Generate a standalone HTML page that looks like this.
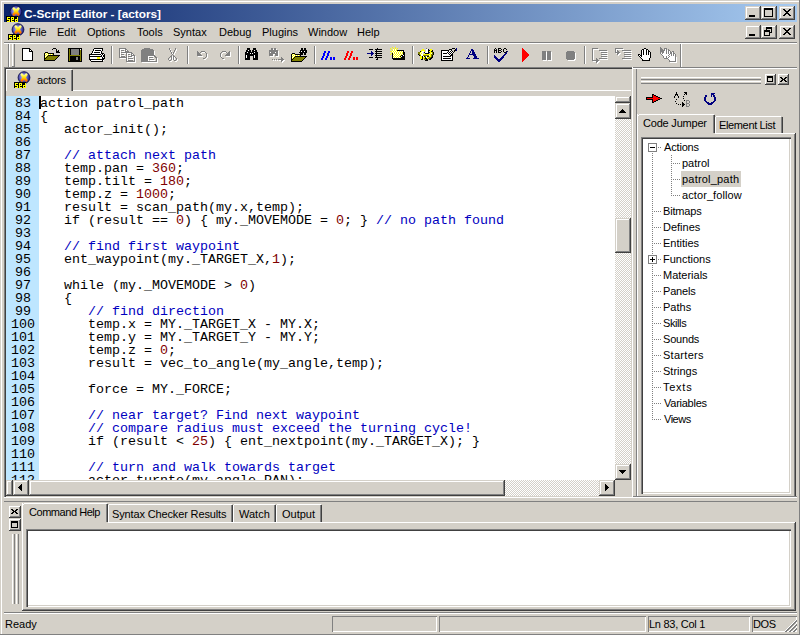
<!DOCTYPE html>
<html><head><meta charset="utf-8">
<style>
*{margin:0;padding:0;box-sizing:border-box}
html,body{width:800px;height:635px;overflow:hidden;background:#D4D0C8}
body{position:relative;font-family:"Liberation Sans",sans-serif;font-size:11px;color:#000}
.a{position:absolute}
svg.a{display:block}
.btn{position:absolute;background:#D4D0C8;box-shadow:inset -1px -1px 0 #404040,inset 1px 1px 0 #D4D0C8,inset -2px -2px 0 #808080,inset 2px 2px 0 #fff}
.btn2{position:absolute;background:#D4D0C8;box-shadow:inset -1px -1px 0 #404040,inset 1px 1px 0 #fff,inset -2px -2px 0 #808080}
.btn1{position:absolute;background:#D4D0C8;box-shadow:inset -1px -1px 0 #808080,inset 1px 1px 0 #fff}
.t{position:absolute;white-space:pre;line-height:13px}
.code{position:absolute;font-family:"Liberation Mono",monospace;font-size:13.33px;line-height:13px;white-space:pre;color:#000}
.ln{position:absolute;width:32px;text-align:center;font-family:"Liberation Mono",monospace;font-size:13.33px;line-height:13px;white-space:pre;color:#000}
.c{color:#0000C0}
.n{color:#800000}
.checker{background-image:repeating-conic-gradient(#fff 0 25%,#D4D0C8 0 50%);background-size:2px 2px}
</style></head><body>

<div class="a" style="left:1px;top:1px;width:798px;height:1px;background:#fff"></div>
<div class="a" style="left:1px;top:1px;width:1px;height:633px;background:#fff"></div>
<div class="a" style="left:799px;top:0px;width:1px;height:635px;background:#808080"></div>
<div class="a" style="left:0px;top:634px;width:800px;height:1px;background:#808080"></div>
<div class="a" style="left:4px;top:4px;width:793px;height:18px;background:linear-gradient(to right,#0A246A,#A6CAF0)"></div>
<svg class="a" style="left:6px;top:5px" width="17" height="17" viewBox="0 0 17 17">
<defs><radialGradient id="sg6_5" cx="0.45" cy="0.45" r="0.55"><stop offset="0" stop-color="#D0D0F8"/><stop offset="0.55" stop-color="#6A6AC8"/><stop offset="1" stop-color="#181870"/></radialGradient>
<linearGradient id="xg6_5" x1="0" y1="0" x2="0" y2="1"><stop offset="0" stop-color="#FFFF80"/><stop offset="0.5" stop-color="#FFE000"/><stop offset="1" stop-color="#FF7000"/></linearGradient></defs>
<circle cx="10" cy="6.6" r="5.9" fill="url(#sg6_5)" stroke="#101050" stroke-width="0.9"/>
<path d="M7.8 3.6L12.3 9.4M12.3 3.6L7.8 9.4" stroke="url(#xg6_5)" stroke-width="2.7" stroke-linecap="round"/>
<g shape-rendering="crispEdges"><rect x="0" y="11" width="12" height="6" fill="#000"/><rect x="1" y="12" width="1" height="1" fill="#FFFF00"/><rect x="2" y="12" width="1" height="1" fill="#FFFF00"/><rect x="3" y="12" width="1" height="1" fill="#FFFF00"/><rect x="5" y="12" width="1" height="1" fill="#FFFF00"/><rect x="6" y="12" width="1" height="1" fill="#FFFF00"/><rect x="7" y="12" width="1" height="1" fill="#FFFF00"/><rect x="11" y="12" width="1" height="1" fill="#FFFF00"/><rect x="1" y="13" width="1" height="1" fill="#FFFF00"/><rect x="5" y="13" width="1" height="1" fill="#FFFF00"/><rect x="7" y="13" width="1" height="1" fill="#FFFF00"/><rect x="11" y="13" width="1" height="1" fill="#FFFF00"/><rect x="1" y="14" width="1" height="1" fill="#FFFF00"/><rect x="2" y="14" width="1" height="1" fill="#FFFF00"/><rect x="3" y="14" width="1" height="1" fill="#FFFF00"/><rect x="5" y="14" width="1" height="1" fill="#FFFF00"/><rect x="6" y="14" width="1" height="1" fill="#FFFF00"/><rect x="7" y="14" width="1" height="1" fill="#FFFF00"/><rect x="9" y="14" width="1" height="1" fill="#FFFF00"/><rect x="10" y="14" width="1" height="1" fill="#FFFF00"/><rect x="11" y="14" width="1" height="1" fill="#FFFF00"/><rect x="3" y="15" width="1" height="1" fill="#FFFF00"/><rect x="5" y="15" width="1" height="1" fill="#FFFF00"/><rect x="9" y="15" width="1" height="1" fill="#FFFF00"/><rect x="11" y="15" width="1" height="1" fill="#FFFF00"/><rect x="1" y="16" width="1" height="1" fill="#FFFF00"/><rect x="2" y="16" width="1" height="1" fill="#FFFF00"/><rect x="3" y="16" width="1" height="1" fill="#FFFF00"/><rect x="5" y="16" width="1" height="1" fill="#FFFF00"/><rect x="6" y="16" width="1" height="1" fill="#FFFF00"/><rect x="7" y="16" width="1" height="1" fill="#FFFF00"/><rect x="9" y="16" width="1" height="1" fill="#FFFF00"/><rect x="10" y="16" width="1" height="1" fill="#FFFF00"/><rect x="11" y="16" width="1" height="1" fill="#FFFF00"/></g>
</svg>
<div class="t" style="left:24px;top:7px;color:#fff;font-weight:bold;font-size:11.8px;line-height:14px">C-Script Editor - [actors]</div>
<div class="btn" style="left:745px;top:6px;width:16px;height:14px"><div class="a" style="left:4px;top:9px;width:6px;height:2px;background:#000"></div></div>
<div class="btn" style="left:761px;top:6px;width:16px;height:14px"><div class="a" style="left:3px;top:2px;width:9px;height:9px;border:1px solid #000;border-top-width:2px"></div></div>
<div class="btn" style="left:779px;top:6px;width:16px;height:14px"><svg class="a" style="left:4px;top:3px" width="8" height="7" shape-rendering="crispEdges"><path d="M0 0h2v1h1v1h2V1h1V0h2v1H7v1H6v1H5v1h1v1h1v1h1v1H6V6H5V5H3v1H2v1H0V6h1V5h1V4h1V3H2V2H1V1H0z" fill="#000"/></svg></div>
<svg class="a" style="left:8px;top:23px" width="17" height="17" viewBox="0 0 17 17">
<defs><radialGradient id="sg8_23" cx="0.45" cy="0.45" r="0.55"><stop offset="0" stop-color="#D0D0F8"/><stop offset="0.55" stop-color="#6A6AC8"/><stop offset="1" stop-color="#181870"/></radialGradient>
<linearGradient id="xg8_23" x1="0" y1="0" x2="0" y2="1"><stop offset="0" stop-color="#FFFF80"/><stop offset="0.5" stop-color="#FFE000"/><stop offset="1" stop-color="#FF7000"/></linearGradient></defs>
<circle cx="10" cy="6.6" r="5.9" fill="url(#sg8_23)" stroke="#101050" stroke-width="0.9"/>
<path d="M7.8 3.6L12.3 9.4M12.3 3.6L7.8 9.4" stroke="url(#xg8_23)" stroke-width="2.7" stroke-linecap="round"/>
<g shape-rendering="crispEdges"><rect x="0" y="11" width="12" height="6" fill="#000"/><rect x="1" y="12" width="1" height="1" fill="#FFFF00"/><rect x="2" y="12" width="1" height="1" fill="#FFFF00"/><rect x="3" y="12" width="1" height="1" fill="#FFFF00"/><rect x="5" y="12" width="1" height="1" fill="#FFFF00"/><rect x="6" y="12" width="1" height="1" fill="#FFFF00"/><rect x="7" y="12" width="1" height="1" fill="#FFFF00"/><rect x="11" y="12" width="1" height="1" fill="#FFFF00"/><rect x="1" y="13" width="1" height="1" fill="#FFFF00"/><rect x="5" y="13" width="1" height="1" fill="#FFFF00"/><rect x="7" y="13" width="1" height="1" fill="#FFFF00"/><rect x="11" y="13" width="1" height="1" fill="#FFFF00"/><rect x="1" y="14" width="1" height="1" fill="#FFFF00"/><rect x="2" y="14" width="1" height="1" fill="#FFFF00"/><rect x="3" y="14" width="1" height="1" fill="#FFFF00"/><rect x="5" y="14" width="1" height="1" fill="#FFFF00"/><rect x="6" y="14" width="1" height="1" fill="#FFFF00"/><rect x="7" y="14" width="1" height="1" fill="#FFFF00"/><rect x="9" y="14" width="1" height="1" fill="#FFFF00"/><rect x="10" y="14" width="1" height="1" fill="#FFFF00"/><rect x="11" y="14" width="1" height="1" fill="#FFFF00"/><rect x="3" y="15" width="1" height="1" fill="#FFFF00"/><rect x="5" y="15" width="1" height="1" fill="#FFFF00"/><rect x="9" y="15" width="1" height="1" fill="#FFFF00"/><rect x="11" y="15" width="1" height="1" fill="#FFFF00"/><rect x="1" y="16" width="1" height="1" fill="#FFFF00"/><rect x="2" y="16" width="1" height="1" fill="#FFFF00"/><rect x="3" y="16" width="1" height="1" fill="#FFFF00"/><rect x="5" y="16" width="1" height="1" fill="#FFFF00"/><rect x="6" y="16" width="1" height="1" fill="#FFFF00"/><rect x="7" y="16" width="1" height="1" fill="#FFFF00"/><rect x="9" y="16" width="1" height="1" fill="#FFFF00"/><rect x="10" y="16" width="1" height="1" fill="#FFFF00"/><rect x="11" y="16" width="1" height="1" fill="#FFFF00"/></g>
</svg>
<div class="t" style="left:29px;top:26px">File</div>
<div class="t" style="left:57px;top:26px">Edit</div>
<div class="t" style="left:87px;top:26px">Options</div>
<div class="t" style="left:137px;top:26px">Tools</div>
<div class="t" style="left:173px;top:26px">Syntax</div>
<div class="t" style="left:219px;top:26px">Debug</div>
<div class="t" style="left:262px;top:26px">Plugins</div>
<div class="t" style="left:308px;top:26px">Window</div>
<div class="t" style="left:357px;top:26px">Help</div>
<div class="btn" style="left:745px;top:25px;width:16px;height:14px"><div class="a" style="left:4px;top:9px;width:6px;height:2px;background:#000"></div></div>
<div class="btn" style="left:761px;top:25px;width:16px;height:14px"><div class="a" style="left:5px;top:2px;width:6px;height:6px;border:1px solid #000;border-top-width:2px"></div><div class="a" style="left:3px;top:5px;width:6px;height:6px;background:#D4D0C8;border:1px solid #000;border-top-width:2px"></div></div>
<div class="btn" style="left:779px;top:25px;width:16px;height:14px"><svg class="a" style="left:4px;top:3px" width="8" height="7" shape-rendering="crispEdges"><path d="M0 0h2v1h1v1h2V1h1V0h2v1H7v1H6v1H5v1h1v1h1v1h1v1H6V6H5V5H3v1H2v1H0V6h1V5h1V4h1V3H2V2H1V1H0z" fill="#000"/></svg></div>
<div class="a" style="left:4px;top:42px;width:793px;height:1px;background:#808080"></div>
<div class="a" style="left:4px;top:43px;width:793px;height:1px;background:#fff"></div>
<div class="a" style="left:8px;top:44px;width:1px;height:23px;background:#808080"></div>
<div class="a" style="left:9px;top:44px;width:1px;height:23px;background:#fff"></div>
<div class="a" style="left:12px;top:44px;width:1px;height:23px;background:#fff"></div>
<div class="a" style="left:14px;top:44px;width:1px;height:23px;background:#808080"></div>
<div class="a" style="left:12px;top:66px;width:3px;height:1px;background:#808080"></div>
<div class="a" style="left:111px;top:46px;width:1px;height:18px;background:#808080"></div>
<div class="a" style="left:112px;top:46px;width:1px;height:18px;background:#fff"></div>
<div class="a" style="left:187px;top:46px;width:1px;height:18px;background:#808080"></div>
<div class="a" style="left:188px;top:46px;width:1px;height:18px;background:#fff"></div>
<div class="a" style="left:238px;top:46px;width:1px;height:18px;background:#808080"></div>
<div class="a" style="left:239px;top:46px;width:1px;height:18px;background:#fff"></div>
<div class="a" style="left:314px;top:46px;width:1px;height:18px;background:#808080"></div>
<div class="a" style="left:315px;top:46px;width:1px;height:18px;background:#fff"></div>
<div class="a" style="left:412px;top:46px;width:1px;height:18px;background:#808080"></div>
<div class="a" style="left:413px;top:46px;width:1px;height:18px;background:#fff"></div>
<div class="a" style="left:487px;top:46px;width:1px;height:18px;background:#808080"></div>
<div class="a" style="left:488px;top:46px;width:1px;height:18px;background:#fff"></div>
<div class="a" style="left:584px;top:46px;width:1px;height:18px;background:#808080"></div>
<div class="a" style="left:585px;top:46px;width:1px;height:18px;background:#fff"></div>
<div class="a" style="left:680px;top:44px;width:1px;height:23px;background:#808080"></div>
<div class="a" style="left:681px;top:44px;width:1px;height:23px;background:#fff"></div>
<svg class="a" style="left:22px;top:48px" width="11" height="13" shape-rendering="crispEdges"><rect x="0" y="0" width="8" height="1" fill="#000000"/><rect x="0" y="1" width="1" height="1" fill="#000000"/><rect x="1" y="1" width="6" height="1" fill="#FFFFFF"/><rect x="7" y="1" width="2" height="1" fill="#000000"/><rect x="0" y="2" width="1" height="1" fill="#000000"/><rect x="1" y="2" width="6" height="1" fill="#FFFFFF"/><rect x="7" y="2" width="1" height="1" fill="#000000"/><rect x="8" y="2" width="1" height="1" fill="#FFFFFF"/><rect x="9" y="2" width="1" height="1" fill="#000000"/><rect x="0" y="3" width="1" height="1" fill="#000000"/><rect x="1" y="3" width="6" height="1" fill="#FFFFFF"/><rect x="7" y="3" width="4" height="1" fill="#000000"/><rect x="0" y="4" width="1" height="1" fill="#000000"/><rect x="1" y="4" width="9" height="1" fill="#FFFFFF"/><rect x="10" y="4" width="1" height="1" fill="#000000"/><rect x="0" y="5" width="1" height="1" fill="#000000"/><rect x="1" y="5" width="9" height="1" fill="#FFFFFF"/><rect x="10" y="5" width="1" height="1" fill="#000000"/><rect x="0" y="6" width="1" height="1" fill="#000000"/><rect x="1" y="6" width="9" height="1" fill="#FFFFFF"/><rect x="10" y="6" width="1" height="1" fill="#000000"/><rect x="0" y="7" width="1" height="1" fill="#000000"/><rect x="1" y="7" width="9" height="1" fill="#FFFFFF"/><rect x="10" y="7" width="1" height="1" fill="#000000"/><rect x="0" y="8" width="1" height="1" fill="#000000"/><rect x="1" y="8" width="9" height="1" fill="#FFFFFF"/><rect x="10" y="8" width="1" height="1" fill="#000000"/><rect x="0" y="9" width="1" height="1" fill="#000000"/><rect x="1" y="9" width="9" height="1" fill="#FFFFFF"/><rect x="10" y="9" width="1" height="1" fill="#000000"/><rect x="0" y="10" width="1" height="1" fill="#000000"/><rect x="1" y="10" width="9" height="1" fill="#FFFFFF"/><rect x="10" y="10" width="1" height="1" fill="#000000"/><rect x="0" y="11" width="1" height="1" fill="#000000"/><rect x="1" y="11" width="9" height="1" fill="#FFFFFF"/><rect x="10" y="11" width="1" height="1" fill="#000000"/><rect x="0" y="12" width="11" height="1" fill="#000000"/></svg>
<svg class="a" style="left:44px;top:47px" width="16" height="14" shape-rendering="crispEdges"><rect x="9" y="1" width="3" height="1" fill="#000000"/><rect x="8" y="2" width="1" height="1" fill="#000000"/><rect x="12" y="2" width="1" height="1" fill="#000000"/><rect x="12" y="3" width="1" height="1" fill="#000000"/><rect x="14" y="3" width="1" height="1" fill="#000000"/><rect x="12" y="4" width="3" height="1" fill="#000000"/><rect x="1" y="5" width="3" height="1" fill="#000000"/><rect x="12" y="5" width="4" height="1" fill="#000000"/><rect x="0" y="6" width="1" height="1" fill="#000000"/><rect x="1" y="6" width="1" height="1" fill="#FFFF00"/><rect x="2" y="6" width="1" height="1" fill="#FFFFFF"/><rect x="3" y="6" width="1" height="1" fill="#FFFF00"/><rect x="4" y="6" width="6" height="1" fill="#000000"/><rect x="0" y="7" width="1" height="1" fill="#000000"/><rect x="1" y="7" width="1" height="1" fill="#FFFFFF"/><rect x="2" y="7" width="1" height="1" fill="#FFFF00"/><rect x="3" y="7" width="1" height="1" fill="#FFFFFF"/><rect x="4" y="7" width="1" height="1" fill="#FFFF00"/><rect x="5" y="7" width="1" height="1" fill="#FFFFFF"/><rect x="6" y="7" width="1" height="1" fill="#FFFF00"/><rect x="7" y="7" width="1" height="1" fill="#FFFFFF"/><rect x="8" y="7" width="1" height="1" fill="#FFFF00"/><rect x="9" y="7" width="1" height="1" fill="#000000"/><rect x="0" y="8" width="1" height="1" fill="#000000"/><rect x="1" y="8" width="1" height="1" fill="#FFFF00"/><rect x="2" y="8" width="1" height="1" fill="#FFFFFF"/><rect x="3" y="8" width="1" height="1" fill="#FFFF00"/><rect x="4" y="8" width="12" height="1" fill="#000000"/><rect x="0" y="9" width="1" height="1" fill="#000000"/><rect x="1" y="9" width="1" height="1" fill="#FFFFFF"/><rect x="2" y="9" width="1" height="1" fill="#FFFF00"/><rect x="3" y="9" width="1" height="1" fill="#000000"/><rect x="4" y="9" width="10" height="1" fill="#808000"/><rect x="14" y="9" width="1" height="1" fill="#000000"/><rect x="0" y="10" width="1" height="1" fill="#000000"/><rect x="1" y="10" width="1" height="1" fill="#FFFF00"/><rect x="2" y="10" width="1" height="1" fill="#000000"/><rect x="3" y="10" width="10" height="1" fill="#808000"/><rect x="13" y="10" width="1" height="1" fill="#000000"/><rect x="0" y="11" width="2" height="1" fill="#000000"/><rect x="2" y="11" width="10" height="1" fill="#808000"/><rect x="12" y="11" width="1" height="1" fill="#000000"/><rect x="0" y="12" width="1" height="1" fill="#000000"/><rect x="1" y="12" width="10" height="1" fill="#808000"/><rect x="11" y="12" width="1" height="1" fill="#000000"/><rect x="0" y="13" width="11" height="1" fill="#000000"/></svg>
<svg class="a" style="left:68px;top:48px" width="14" height="14" shape-rendering="crispEdges"><rect x="0" y="0" width="14" height="1" fill="#000000"/><rect x="0" y="1" width="1" height="1" fill="#000000"/><rect x="1" y="1" width="1" height="1" fill="#808000"/><rect x="2" y="1" width="1" height="1" fill="#000000"/><rect x="3" y="1" width="8" height="1" fill="#808080"/><rect x="11" y="1" width="1" height="1" fill="#000000"/><rect x="12" y="1" width="1" height="1" fill="#FFFFFF"/><rect x="13" y="1" width="1" height="1" fill="#000000"/><rect x="0" y="2" width="1" height="1" fill="#000000"/><rect x="1" y="2" width="1" height="1" fill="#808000"/><rect x="2" y="2" width="1" height="1" fill="#000000"/><rect x="3" y="2" width="8" height="1" fill="#808080"/><rect x="11" y="2" width="1" height="1" fill="#000000"/><rect x="12" y="2" width="1" height="1" fill="#808000"/><rect x="13" y="2" width="1" height="1" fill="#000000"/><rect x="0" y="3" width="1" height="1" fill="#000000"/><rect x="1" y="3" width="1" height="1" fill="#808000"/><rect x="2" y="3" width="1" height="1" fill="#000000"/><rect x="3" y="3" width="8" height="1" fill="#808080"/><rect x="11" y="3" width="1" height="1" fill="#000000"/><rect x="12" y="3" width="1" height="1" fill="#808000"/><rect x="13" y="3" width="1" height="1" fill="#000000"/><rect x="0" y="4" width="1" height="1" fill="#000000"/><rect x="1" y="4" width="1" height="1" fill="#808000"/><rect x="2" y="4" width="1" height="1" fill="#000000"/><rect x="3" y="4" width="8" height="1" fill="#808080"/><rect x="11" y="4" width="1" height="1" fill="#000000"/><rect x="12" y="4" width="1" height="1" fill="#808000"/><rect x="13" y="4" width="1" height="1" fill="#000000"/><rect x="0" y="5" width="1" height="1" fill="#000000"/><rect x="1" y="5" width="1" height="1" fill="#808000"/><rect x="2" y="5" width="1" height="1" fill="#000000"/><rect x="3" y="5" width="8" height="1" fill="#808080"/><rect x="11" y="5" width="1" height="1" fill="#000000"/><rect x="12" y="5" width="1" height="1" fill="#808000"/><rect x="13" y="5" width="1" height="1" fill="#000000"/><rect x="0" y="6" width="1" height="1" fill="#000000"/><rect x="1" y="6" width="1" height="1" fill="#808000"/><rect x="2" y="6" width="1" height="1" fill="#000000"/><rect x="3" y="6" width="8" height="1" fill="#808080"/><rect x="11" y="6" width="1" height="1" fill="#000000"/><rect x="12" y="6" width="1" height="1" fill="#808000"/><rect x="13" y="6" width="1" height="1" fill="#000000"/><rect x="0" y="7" width="1" height="1" fill="#000000"/><rect x="1" y="7" width="12" height="1" fill="#808000"/><rect x="13" y="7" width="1" height="1" fill="#000000"/><rect x="0" y="8" width="1" height="1" fill="#000000"/><rect x="1" y="8" width="1" height="1" fill="#808000"/><rect x="2" y="8" width="10" height="1" fill="#000000"/><rect x="12" y="8" width="1" height="1" fill="#808000"/><rect x="13" y="8" width="1" height="1" fill="#000000"/><rect x="0" y="9" width="1" height="1" fill="#000000"/><rect x="1" y="9" width="1" height="1" fill="#808000"/><rect x="2" y="9" width="6" height="1" fill="#000000"/><rect x="8" y="9" width="2" height="1" fill="#808080"/><rect x="10" y="9" width="2" height="1" fill="#000000"/><rect x="12" y="9" width="1" height="1" fill="#808000"/><rect x="13" y="9" width="1" height="1" fill="#000000"/><rect x="0" y="10" width="1" height="1" fill="#000000"/><rect x="1" y="10" width="1" height="1" fill="#808000"/><rect x="2" y="10" width="6" height="1" fill="#000000"/><rect x="8" y="10" width="2" height="1" fill="#808080"/><rect x="10" y="10" width="2" height="1" fill="#000000"/><rect x="12" y="10" width="1" height="1" fill="#808000"/><rect x="13" y="10" width="1" height="1" fill="#000000"/><rect x="0" y="11" width="1" height="1" fill="#000000"/><rect x="1" y="11" width="1" height="1" fill="#808000"/><rect x="2" y="11" width="6" height="1" fill="#000000"/><rect x="8" y="11" width="2" height="1" fill="#808080"/><rect x="10" y="11" width="2" height="1" fill="#000000"/><rect x="12" y="11" width="1" height="1" fill="#808000"/><rect x="13" y="11" width="1" height="1" fill="#000000"/><rect x="0" y="12" width="1" height="1" fill="#000000"/><rect x="1" y="12" width="1" height="1" fill="#808000"/><rect x="2" y="12" width="10" height="1" fill="#000000"/><rect x="12" y="12" width="1" height="1" fill="#808000"/><rect x="13" y="12" width="1" height="1" fill="#000000"/><rect x="0" y="13" width="14" height="1" fill="#000000"/></svg>
<svg class="a" style="left:89px;top:48px" width="16" height="14" shape-rendering="crispEdges"><rect x="5" y="0" width="9" height="1" fill="#000000"/><rect x="4" y="1" width="1" height="1" fill="#000000"/><rect x="5" y="1" width="8" height="1" fill="#FFFFFF"/><rect x="13" y="1" width="1" height="1" fill="#000000"/><rect x="4" y="2" width="1" height="1" fill="#000000"/><rect x="5" y="2" width="1" height="1" fill="#FFFFFF"/><rect x="6" y="2" width="6" height="1" fill="#000000"/><rect x="12" y="2" width="1" height="1" fill="#FFFFFF"/><rect x="13" y="2" width="1" height="1" fill="#000000"/><rect x="3" y="3" width="1" height="1" fill="#000000"/><rect x="4" y="3" width="8" height="1" fill="#FFFFFF"/><rect x="12" y="3" width="1" height="1" fill="#000000"/><rect x="3" y="4" width="1" height="1" fill="#000000"/><rect x="4" y="4" width="1" height="1" fill="#FFFFFF"/><rect x="5" y="4" width="6" height="1" fill="#000000"/><rect x="11" y="4" width="1" height="1" fill="#FFFFFF"/><rect x="12" y="4" width="1" height="1" fill="#000000"/><rect x="2" y="5" width="1" height="1" fill="#000000"/><rect x="3" y="5" width="9" height="1" fill="#FFFFFF"/><rect x="12" y="5" width="3" height="1" fill="#000000"/><rect x="0" y="6" width="12" height="1" fill="#000000"/><rect x="12" y="6" width="1" height="1" fill="#FFFFFF"/><rect x="13" y="6" width="1" height="1" fill="#000000"/><rect x="14" y="6" width="1" height="1" fill="#FFFFFF"/><rect x="15" y="6" width="1" height="1" fill="#000000"/><rect x="0" y="7" width="1" height="1" fill="#000000"/><rect x="1" y="7" width="11" height="1" fill="#FFFFFF"/><rect x="12" y="7" width="1" height="1" fill="#000000"/><rect x="13" y="7" width="1" height="1" fill="#FFFFFF"/><rect x="14" y="7" width="2" height="1" fill="#000000"/><rect x="0" y="8" width="13" height="1" fill="#000000"/><rect x="13" y="8" width="1" height="1" fill="#FFFFFF"/><rect x="14" y="8" width="2" height="1" fill="#000000"/><rect x="0" y="9" width="1" height="1" fill="#000000"/><rect x="1" y="9" width="7" height="1" fill="#FFFFFF"/><rect x="8" y="9" width="3" height="1" fill="#FFFF00"/><rect x="11" y="9" width="2" height="1" fill="#FFFFFF"/><rect x="13" y="9" width="1" height="1" fill="#000000"/><rect x="14" y="9" width="1" height="1" fill="#FFFFFF"/><rect x="15" y="9" width="1" height="1" fill="#000000"/><rect x="0" y="10" width="1" height="1" fill="#000000"/><rect x="1" y="10" width="7" height="1" fill="#FFFFFF"/><rect x="8" y="10" width="3" height="1" fill="#FFFF00"/><rect x="11" y="10" width="2" height="1" fill="#FFFFFF"/><rect x="13" y="10" width="3" height="1" fill="#000000"/><rect x="0" y="11" width="15" height="1" fill="#000000"/><rect x="1" y="12" width="1" height="1" fill="#000000"/><rect x="2" y="12" width="11" height="1" fill="#FFFFFF"/><rect x="13" y="12" width="1" height="1" fill="#000000"/><rect x="14" y="12" width="1" height="1" fill="#FFFFFF"/><rect x="2" y="13" width="12" height="1" fill="#000000"/></svg>
<svg class="a" style="left:119px;top:48px" width="17" height="15" shape-rendering="crispEdges"><rect x="1" y="1" width="7" height="1" fill="#FFFFFF"/><rect x="1" y="2" width="1" height="1" fill="#FFFFFF"/><rect x="7" y="2" width="2" height="1" fill="#FFFFFF"/><rect x="1" y="3" width="1" height="1" fill="#FFFFFF"/><rect x="3" y="3" width="3" height="1" fill="#FFFFFF"/><rect x="7" y="3" width="1" height="1" fill="#FFFFFF"/><rect x="9" y="3" width="1" height="1" fill="#FFFFFF"/><rect x="1" y="4" width="1" height="1" fill="#FFFFFF"/><rect x="7" y="4" width="4" height="1" fill="#FFFFFF"/><rect x="1" y="5" width="1" height="1" fill="#FFFFFF"/><rect x="3" y="5" width="11" height="1" fill="#FFFFFF"/><rect x="1" y="6" width="1" height="1" fill="#FFFFFF"/><rect x="8" y="6" width="1" height="1" fill="#FFFFFF"/><rect x="13" y="6" width="2" height="1" fill="#FFFFFF"/><rect x="1" y="7" width="1" height="1" fill="#FFFFFF"/><rect x="3" y="7" width="3" height="1" fill="#FFFFFF"/><rect x="8" y="7" width="1" height="1" fill="#FFFFFF"/><rect x="10" y="7" width="2" height="1" fill="#FFFFFF"/><rect x="13" y="7" width="1" height="1" fill="#FFFFFF"/><rect x="15" y="7" width="1" height="1" fill="#FFFFFF"/><rect x="1" y="8" width="1" height="1" fill="#FFFFFF"/><rect x="8" y="8" width="1" height="1" fill="#FFFFFF"/><rect x="13" y="8" width="4" height="1" fill="#FFFFFF"/><rect x="1" y="9" width="1" height="1" fill="#FFFFFF"/><rect x="3" y="9" width="4" height="1" fill="#FFFFFF"/><rect x="8" y="9" width="1" height="1" fill="#FFFFFF"/><rect x="10" y="9" width="4" height="1" fill="#FFFFFF"/><rect x="16" y="9" width="1" height="1" fill="#FFFFFF"/><rect x="1" y="10" width="8" height="1" fill="#FFFFFF"/><rect x="16" y="10" width="1" height="1" fill="#FFFFFF"/><rect x="8" y="11" width="1" height="1" fill="#FFFFFF"/><rect x="10" y="11" width="5" height="1" fill="#FFFFFF"/><rect x="16" y="11" width="1" height="1" fill="#FFFFFF"/><rect x="8" y="12" width="1" height="1" fill="#FFFFFF"/><rect x="16" y="12" width="1" height="1" fill="#FFFFFF"/><rect x="8" y="13" width="1" height="1" fill="#FFFFFF"/><rect x="10" y="13" width="5" height="1" fill="#FFFFFF"/><rect x="16" y="13" width="1" height="1" fill="#FFFFFF"/><rect x="8" y="14" width="9" height="1" fill="#FFFFFF"/></svg><svg class="a" style="left:119px;top:48px" width="16" height="14" shape-rendering="crispEdges"><rect x="0" y="0" width="7" height="1" fill="#808080"/><rect x="0" y="1" width="1" height="1" fill="#808080"/><rect x="6" y="1" width="2" height="1" fill="#808080"/><rect x="0" y="2" width="1" height="1" fill="#808080"/><rect x="2" y="2" width="3" height="1" fill="#808080"/><rect x="6" y="2" width="1" height="1" fill="#808080"/><rect x="8" y="2" width="1" height="1" fill="#808080"/><rect x="0" y="3" width="1" height="1" fill="#808080"/><rect x="6" y="3" width="4" height="1" fill="#808080"/><rect x="0" y="4" width="1" height="1" fill="#808080"/><rect x="2" y="4" width="11" height="1" fill="#808080"/><rect x="0" y="5" width="1" height="1" fill="#808080"/><rect x="7" y="5" width="1" height="1" fill="#808080"/><rect x="12" y="5" width="2" height="1" fill="#808080"/><rect x="0" y="6" width="1" height="1" fill="#808080"/><rect x="2" y="6" width="3" height="1" fill="#808080"/><rect x="7" y="6" width="1" height="1" fill="#808080"/><rect x="9" y="6" width="2" height="1" fill="#808080"/><rect x="12" y="6" width="1" height="1" fill="#808080"/><rect x="14" y="6" width="1" height="1" fill="#808080"/><rect x="0" y="7" width="1" height="1" fill="#808080"/><rect x="7" y="7" width="1" height="1" fill="#808080"/><rect x="12" y="7" width="4" height="1" fill="#808080"/><rect x="0" y="8" width="1" height="1" fill="#808080"/><rect x="2" y="8" width="4" height="1" fill="#808080"/><rect x="7" y="8" width="1" height="1" fill="#808080"/><rect x="9" y="8" width="4" height="1" fill="#808080"/><rect x="15" y="8" width="1" height="1" fill="#808080"/><rect x="0" y="9" width="8" height="1" fill="#808080"/><rect x="15" y="9" width="1" height="1" fill="#808080"/><rect x="7" y="10" width="1" height="1" fill="#808080"/><rect x="9" y="10" width="5" height="1" fill="#808080"/><rect x="15" y="10" width="1" height="1" fill="#808080"/><rect x="7" y="11" width="1" height="1" fill="#808080"/><rect x="15" y="11" width="1" height="1" fill="#808080"/><rect x="7" y="12" width="1" height="1" fill="#808080"/><rect x="9" y="12" width="5" height="1" fill="#808080"/><rect x="15" y="12" width="1" height="1" fill="#808080"/><rect x="7" y="13" width="9" height="1" fill="#808080"/></svg>
<svg class="a" style="left:141px;top:48px" width="17" height="15" shape-rendering="crispEdges"><rect x="4" y="1" width="6" height="1" fill="#FFFFFF"/><rect x="2" y="2" width="11" height="1" fill="#FFFFFF"/><rect x="1" y="3" width="13" height="1" fill="#FFFFFF"/><rect x="1" y="4" width="13" height="1" fill="#FFFFFF"/><rect x="1" y="5" width="13" height="1" fill="#FFFFFF"/><rect x="1" y="6" width="13" height="1" fill="#FFFFFF"/><rect x="1" y="7" width="13" height="1" fill="#FFFFFF"/><rect x="1" y="8" width="14" height="1" fill="#FFFFFF"/><rect x="1" y="9" width="7" height="1" fill="#FFFFFF"/><rect x="14" y="9" width="2" height="1" fill="#FFFFFF"/><rect x="1" y="10" width="7" height="1" fill="#FFFFFF"/><rect x="9" y="10" width="4" height="1" fill="#FFFFFF"/><rect x="15" y="10" width="2" height="1" fill="#FFFFFF"/><rect x="1" y="11" width="7" height="1" fill="#FFFFFF"/><rect x="16" y="11" width="1" height="1" fill="#FFFFFF"/><rect x="1" y="12" width="7" height="1" fill="#FFFFFF"/><rect x="9" y="12" width="5" height="1" fill="#FFFFFF"/><rect x="16" y="12" width="1" height="1" fill="#FFFFFF"/><rect x="1" y="13" width="7" height="1" fill="#FFFFFF"/><rect x="16" y="13" width="1" height="1" fill="#FFFFFF"/><rect x="1" y="14" width="16" height="1" fill="#FFFFFF"/></svg><svg class="a" style="left:141px;top:48px" width="16" height="14" shape-rendering="crispEdges"><rect x="3" y="0" width="6" height="1" fill="#808080"/><rect x="1" y="1" width="11" height="1" fill="#808080"/><rect x="0" y="2" width="13" height="1" fill="#808080"/><rect x="0" y="3" width="13" height="1" fill="#808080"/><rect x="0" y="4" width="13" height="1" fill="#808080"/><rect x="0" y="5" width="13" height="1" fill="#808080"/><rect x="0" y="6" width="13" height="1" fill="#808080"/><rect x="0" y="7" width="14" height="1" fill="#808080"/><rect x="0" y="8" width="7" height="1" fill="#808080"/><rect x="13" y="8" width="2" height="1" fill="#808080"/><rect x="0" y="9" width="7" height="1" fill="#808080"/><rect x="8" y="9" width="4" height="1" fill="#808080"/><rect x="14" y="9" width="2" height="1" fill="#808080"/><rect x="0" y="10" width="7" height="1" fill="#808080"/><rect x="15" y="10" width="1" height="1" fill="#808080"/><rect x="0" y="11" width="7" height="1" fill="#808080"/><rect x="8" y="11" width="5" height="1" fill="#808080"/><rect x="15" y="11" width="1" height="1" fill="#808080"/><rect x="0" y="12" width="7" height="1" fill="#808080"/><rect x="15" y="12" width="1" height="1" fill="#808080"/><rect x="0" y="13" width="16" height="1" fill="#808080"/></svg>
<svg class="a" style="left:168px;top:48px" width="10" height="14" shape-rendering="crispEdges"><rect x="2" y="1" width="1" height="1" fill="#FFFFFF"/><rect x="8" y="1" width="1" height="1" fill="#FFFFFF"/><rect x="2" y="2" width="1" height="1" fill="#FFFFFF"/><rect x="8" y="2" width="1" height="1" fill="#FFFFFF"/><rect x="3" y="3" width="1" height="1" fill="#FFFFFF"/><rect x="7" y="3" width="1" height="1" fill="#FFFFFF"/><rect x="3" y="4" width="1" height="1" fill="#FFFFFF"/><rect x="7" y="4" width="1" height="1" fill="#FFFFFF"/><rect x="4" y="5" width="1" height="1" fill="#FFFFFF"/><rect x="6" y="5" width="1" height="1" fill="#FFFFFF"/><rect x="4" y="6" width="1" height="1" fill="#FFFFFF"/><rect x="6" y="6" width="1" height="1" fill="#FFFFFF"/><rect x="5" y="7" width="1" height="1" fill="#FFFFFF"/><rect x="4" y="8" width="1" height="1" fill="#FFFFFF"/><rect x="6" y="8" width="1" height="1" fill="#FFFFFF"/><rect x="3" y="9" width="2" height="1" fill="#FFFFFF"/><rect x="6" y="9" width="2" height="1" fill="#FFFFFF"/><rect x="2" y="10" width="1" height="1" fill="#FFFFFF"/><rect x="4" y="10" width="1" height="1" fill="#FFFFFF"/><rect x="6" y="10" width="1" height="1" fill="#FFFFFF"/><rect x="8" y="10" width="1" height="1" fill="#FFFFFF"/><rect x="1" y="11" width="1" height="1" fill="#FFFFFF"/><rect x="4" y="11" width="1" height="1" fill="#FFFFFF"/><rect x="6" y="11" width="1" height="1" fill="#FFFFFF"/><rect x="9" y="11" width="1" height="1" fill="#FFFFFF"/><rect x="1" y="12" width="1" height="1" fill="#FFFFFF"/><rect x="4" y="12" width="1" height="1" fill="#FFFFFF"/><rect x="6" y="12" width="1" height="1" fill="#FFFFFF"/><rect x="9" y="12" width="1" height="1" fill="#FFFFFF"/><rect x="2" y="13" width="2" height="1" fill="#FFFFFF"/><rect x="7" y="13" width="2" height="1" fill="#FFFFFF"/></svg><svg class="a" style="left:168px;top:48px" width="9" height="13" shape-rendering="crispEdges"><rect x="1" y="0" width="1" height="1" fill="#808080"/><rect x="7" y="0" width="1" height="1" fill="#808080"/><rect x="1" y="1" width="1" height="1" fill="#808080"/><rect x="7" y="1" width="1" height="1" fill="#808080"/><rect x="2" y="2" width="1" height="1" fill="#808080"/><rect x="6" y="2" width="1" height="1" fill="#808080"/><rect x="2" y="3" width="1" height="1" fill="#808080"/><rect x="6" y="3" width="1" height="1" fill="#808080"/><rect x="3" y="4" width="1" height="1" fill="#808080"/><rect x="5" y="4" width="1" height="1" fill="#808080"/><rect x="3" y="5" width="1" height="1" fill="#808080"/><rect x="5" y="5" width="1" height="1" fill="#808080"/><rect x="4" y="6" width="1" height="1" fill="#808080"/><rect x="3" y="7" width="1" height="1" fill="#808080"/><rect x="5" y="7" width="1" height="1" fill="#808080"/><rect x="2" y="8" width="2" height="1" fill="#808080"/><rect x="5" y="8" width="2" height="1" fill="#808080"/><rect x="1" y="9" width="1" height="1" fill="#808080"/><rect x="3" y="9" width="1" height="1" fill="#808080"/><rect x="5" y="9" width="1" height="1" fill="#808080"/><rect x="7" y="9" width="1" height="1" fill="#808080"/><rect x="0" y="10" width="1" height="1" fill="#808080"/><rect x="3" y="10" width="1" height="1" fill="#808080"/><rect x="5" y="10" width="1" height="1" fill="#808080"/><rect x="8" y="10" width="1" height="1" fill="#808080"/><rect x="0" y="11" width="1" height="1" fill="#808080"/><rect x="3" y="11" width="1" height="1" fill="#808080"/><rect x="5" y="11" width="1" height="1" fill="#808080"/><rect x="8" y="11" width="1" height="1" fill="#808080"/><rect x="1" y="12" width="2" height="1" fill="#808080"/><rect x="6" y="12" width="2" height="1" fill="#808080"/></svg>
<svg class="a" style="left:197px;top:51px" width="12" height="9" shape-rendering="crispEdges"><rect x="1" y="1" width="1" height="1" fill="#FFFFFF"/><rect x="5" y="1" width="4" height="1" fill="#FFFFFF"/><rect x="1" y="2" width="2" height="1" fill="#FFFFFF"/><rect x="4" y="2" width="1" height="1" fill="#FFFFFF"/><rect x="9" y="2" width="1" height="1" fill="#FFFFFF"/><rect x="1" y="3" width="3" height="1" fill="#FFFFFF"/><rect x="10" y="3" width="1" height="1" fill="#FFFFFF"/><rect x="1" y="4" width="4" height="1" fill="#FFFFFF"/><rect x="10" y="4" width="1" height="1" fill="#FFFFFF"/><rect x="1" y="5" width="5" height="1" fill="#FFFFFF"/><rect x="10" y="5" width="1" height="1" fill="#FFFFFF"/><rect x="10" y="6" width="1" height="1" fill="#FFFFFF"/><rect x="9" y="7" width="1" height="1" fill="#FFFFFF"/><rect x="7" y="8" width="2" height="1" fill="#FFFFFF"/></svg><svg class="a" style="left:197px;top:51px" width="11" height="8" shape-rendering="crispEdges"><rect x="0" y="0" width="1" height="1" fill="#808080"/><rect x="4" y="0" width="4" height="1" fill="#808080"/><rect x="0" y="1" width="2" height="1" fill="#808080"/><rect x="3" y="1" width="1" height="1" fill="#808080"/><rect x="8" y="1" width="1" height="1" fill="#808080"/><rect x="0" y="2" width="3" height="1" fill="#808080"/><rect x="9" y="2" width="1" height="1" fill="#808080"/><rect x="0" y="3" width="4" height="1" fill="#808080"/><rect x="9" y="3" width="1" height="1" fill="#808080"/><rect x="0" y="4" width="5" height="1" fill="#808080"/><rect x="9" y="4" width="1" height="1" fill="#808080"/><rect x="9" y="5" width="1" height="1" fill="#808080"/><rect x="8" y="6" width="1" height="1" fill="#808080"/><rect x="6" y="7" width="2" height="1" fill="#808080"/></svg>
<svg class="a" style="left:219px;top:51px" width="12" height="9" shape-rendering="crispEdges"><rect x="4" y="1" width="4" height="1" fill="#FFFFFF"/><rect x="11" y="1" width="1" height="1" fill="#FFFFFF"/><rect x="3" y="2" width="1" height="1" fill="#FFFFFF"/><rect x="8" y="2" width="1" height="1" fill="#FFFFFF"/><rect x="10" y="2" width="2" height="1" fill="#FFFFFF"/><rect x="2" y="3" width="1" height="1" fill="#FFFFFF"/><rect x="9" y="3" width="3" height="1" fill="#FFFFFF"/><rect x="2" y="4" width="1" height="1" fill="#FFFFFF"/><rect x="8" y="4" width="4" height="1" fill="#FFFFFF"/><rect x="2" y="5" width="1" height="1" fill="#FFFFFF"/><rect x="7" y="5" width="5" height="1" fill="#FFFFFF"/><rect x="2" y="6" width="1" height="1" fill="#FFFFFF"/><rect x="3" y="7" width="1" height="1" fill="#FFFFFF"/><rect x="4" y="8" width="2" height="1" fill="#FFFFFF"/></svg><svg class="a" style="left:219px;top:51px" width="11" height="8" shape-rendering="crispEdges"><rect x="3" y="0" width="4" height="1" fill="#808080"/><rect x="10" y="0" width="1" height="1" fill="#808080"/><rect x="2" y="1" width="1" height="1" fill="#808080"/><rect x="7" y="1" width="1" height="1" fill="#808080"/><rect x="9" y="1" width="2" height="1" fill="#808080"/><rect x="1" y="2" width="1" height="1" fill="#808080"/><rect x="8" y="2" width="3" height="1" fill="#808080"/><rect x="1" y="3" width="1" height="1" fill="#808080"/><rect x="7" y="3" width="4" height="1" fill="#808080"/><rect x="1" y="4" width="1" height="1" fill="#808080"/><rect x="6" y="4" width="5" height="1" fill="#808080"/><rect x="1" y="5" width="1" height="1" fill="#808080"/><rect x="2" y="6" width="1" height="1" fill="#808080"/><rect x="3" y="7" width="2" height="1" fill="#808080"/></svg>
<svg class="a" style="left:245px;top:48px" width="15" height="12" shape-rendering="crispEdges"><rect x="2" y="0" width="3" height="1" fill="#000000"/><rect x="8" y="0" width="3" height="1" fill="#000000"/><rect x="2" y="1" width="3" height="1" fill="#000000"/><rect x="8" y="1" width="3" height="1" fill="#000000"/><rect x="1" y="2" width="2" height="1" fill="#000000"/><rect x="3" y="2" width="1" height="1" fill="#FFFFFF"/><rect x="4" y="2" width="2" height="1" fill="#000000"/><rect x="7" y="2" width="2" height="1" fill="#000000"/><rect x="9" y="2" width="1" height="1" fill="#FFFFFF"/><rect x="10" y="2" width="2" height="1" fill="#000000"/><rect x="1" y="3" width="5" height="1" fill="#000000"/><rect x="7" y="3" width="5" height="1" fill="#000000"/><rect x="0" y="4" width="2" height="1" fill="#000000"/><rect x="2" y="4" width="1" height="1" fill="#FFFFFF"/><rect x="3" y="4" width="6" height="1" fill="#000000"/><rect x="9" y="4" width="1" height="1" fill="#FFFFFF"/><rect x="10" y="4" width="3" height="1" fill="#000000"/><rect x="0" y="5" width="5" height="1" fill="#000000"/><rect x="5" y="5" width="1" height="1" fill="#FFFFFF"/><rect x="6" y="5" width="1" height="1" fill="#000000"/><rect x="7" y="5" width="1" height="1" fill="#FFFFFF"/><rect x="8" y="5" width="5" height="1" fill="#000000"/><rect x="0" y="6" width="13" height="1" fill="#000000"/><rect x="0" y="7" width="1" height="1" fill="#000000"/><rect x="1" y="7" width="1" height="1" fill="#FFFFFF"/><rect x="2" y="7" width="7" height="1" fill="#000000"/><rect x="9" y="7" width="1" height="1" fill="#FFFFFF"/><rect x="10" y="7" width="3" height="1" fill="#000000"/><rect x="0" y="8" width="1" height="1" fill="#000000"/><rect x="1" y="8" width="1" height="1" fill="#FFFFFF"/><rect x="2" y="8" width="3" height="1" fill="#000000"/><rect x="8" y="8" width="1" height="1" fill="#000000"/><rect x="9" y="8" width="1" height="1" fill="#FFFFFF"/><rect x="10" y="8" width="3" height="1" fill="#000000"/><rect x="0" y="9" width="1" height="1" fill="#000000"/><rect x="1" y="9" width="1" height="1" fill="#FFFFFF"/><rect x="2" y="9" width="3" height="1" fill="#000000"/><rect x="8" y="9" width="1" height="1" fill="#000000"/><rect x="9" y="9" width="1" height="1" fill="#FFFFFF"/><rect x="10" y="9" width="3" height="1" fill="#000000"/><rect x="0" y="10" width="5" height="1" fill="#000000"/><rect x="8" y="10" width="5" height="1" fill="#000000"/><rect x="0" y="11" width="5" height="1" fill="#000000"/><rect x="8" y="11" width="5" height="1" fill="#000000"/></svg>
<svg class="a" style="left:269px;top:48px" width="16" height="15" shape-rendering="crispEdges"><rect x="3" y="1" width="2" height="1" fill="#FFFFFF"/><rect x="6" y="1" width="2" height="1" fill="#FFFFFF"/><rect x="3" y="2" width="2" height="1" fill="#FFFFFF"/><rect x="6" y="2" width="2" height="1" fill="#FFFFFF"/><rect x="1" y="3" width="9" height="1" fill="#FFFFFF"/><rect x="1" y="4" width="9" height="1" fill="#FFFFFF"/><rect x="1" y="5" width="1" height="1" fill="#FFFFFF"/><rect x="3" y="5" width="4" height="1" fill="#FFFFFF"/><rect x="8" y="5" width="2" height="1" fill="#FFFFFF"/><rect x="1" y="6" width="9" height="1" fill="#FFFFFF"/><rect x="1" y="7" width="4" height="1" fill="#FFFFFF"/><rect x="7" y="7" width="3" height="1" fill="#FFFFFF"/><rect x="1" y="8" width="4" height="1" fill="#FFFFFF"/><rect x="7" y="8" width="3" height="1" fill="#FFFFFF"/><rect x="13" y="10" width="1" height="1" fill="#FFFFFF"/><rect x="13" y="11" width="2" height="1" fill="#FFFFFF"/><rect x="4" y="12" width="1" height="1" fill="#FFFFFF"/><rect x="6" y="12" width="1" height="1" fill="#FFFFFF"/><rect x="8" y="12" width="1" height="1" fill="#FFFFFF"/><rect x="10" y="12" width="6" height="1" fill="#FFFFFF"/><rect x="13" y="13" width="2" height="1" fill="#FFFFFF"/><rect x="13" y="14" width="1" height="1" fill="#FFFFFF"/></svg><svg class="a" style="left:269px;top:48px" width="15" height="14" shape-rendering="crispEdges"><rect x="2" y="0" width="2" height="1" fill="#808080"/><rect x="5" y="0" width="2" height="1" fill="#808080"/><rect x="2" y="1" width="2" height="1" fill="#808080"/><rect x="5" y="1" width="2" height="1" fill="#808080"/><rect x="0" y="2" width="9" height="1" fill="#808080"/><rect x="0" y="3" width="9" height="1" fill="#808080"/><rect x="0" y="4" width="1" height="1" fill="#808080"/><rect x="2" y="4" width="4" height="1" fill="#808080"/><rect x="7" y="4" width="2" height="1" fill="#808080"/><rect x="0" y="5" width="9" height="1" fill="#808080"/><rect x="0" y="6" width="4" height="1" fill="#808080"/><rect x="6" y="6" width="3" height="1" fill="#808080"/><rect x="0" y="7" width="4" height="1" fill="#808080"/><rect x="6" y="7" width="3" height="1" fill="#808080"/><rect x="12" y="9" width="1" height="1" fill="#808080"/><rect x="12" y="10" width="2" height="1" fill="#808080"/><rect x="3" y="11" width="1" height="1" fill="#808080"/><rect x="5" y="11" width="1" height="1" fill="#808080"/><rect x="7" y="11" width="1" height="1" fill="#808080"/><rect x="9" y="11" width="6" height="1" fill="#808080"/><rect x="12" y="12" width="2" height="1" fill="#808080"/><rect x="12" y="13" width="1" height="1" fill="#808080"/></svg>
<svg class="a" style="left:291px;top:48px" width="16" height="14" shape-rendering="crispEdges"><rect x="10" y="0" width="2" height="1" fill="#000000"/><rect x="13" y="0" width="2" height="1" fill="#000000"/><rect x="10" y="1" width="2" height="1" fill="#000000"/><rect x="13" y="1" width="2" height="1" fill="#000000"/><rect x="9" y="2" width="7" height="1" fill="#000000"/><rect x="9" y="3" width="1" height="1" fill="#000000"/><rect x="10" y="3" width="1" height="1" fill="#FFFFFF"/><rect x="11" y="3" width="2" height="1" fill="#000000"/><rect x="13" y="3" width="1" height="1" fill="#FFFFFF"/><rect x="14" y="3" width="2" height="1" fill="#000000"/><rect x="8" y="4" width="8" height="1" fill="#000000"/><rect x="1" y="5" width="3" height="1" fill="#000000"/><rect x="9" y="5" width="3" height="1" fill="#000000"/><rect x="13" y="5" width="2" height="1" fill="#000000"/><rect x="0" y="6" width="1" height="1" fill="#000000"/><rect x="1" y="6" width="1" height="1" fill="#FFFF00"/><rect x="2" y="6" width="1" height="1" fill="#FFFFFF"/><rect x="3" y="6" width="1" height="1" fill="#FFFF00"/><rect x="4" y="6" width="8" height="1" fill="#000000"/><rect x="13" y="6" width="2" height="1" fill="#000000"/><rect x="0" y="7" width="1" height="1" fill="#000000"/><rect x="1" y="7" width="1" height="1" fill="#FFFFFF"/><rect x="2" y="7" width="1" height="1" fill="#FFFF00"/><rect x="3" y="7" width="1" height="1" fill="#FFFFFF"/><rect x="4" y="7" width="1" height="1" fill="#FFFF00"/><rect x="5" y="7" width="1" height="1" fill="#FFFFFF"/><rect x="6" y="7" width="1" height="1" fill="#FFFF00"/><rect x="7" y="7" width="1" height="1" fill="#FFFFFF"/><rect x="8" y="7" width="1" height="1" fill="#FFFF00"/><rect x="9" y="7" width="1" height="1" fill="#000000"/><rect x="0" y="8" width="1" height="1" fill="#000000"/><rect x="1" y="8" width="1" height="1" fill="#FFFF00"/><rect x="2" y="8" width="1" height="1" fill="#FFFFFF"/><rect x="3" y="8" width="1" height="1" fill="#FFFF00"/><rect x="4" y="8" width="12" height="1" fill="#000000"/><rect x="0" y="9" width="1" height="1" fill="#000000"/><rect x="1" y="9" width="1" height="1" fill="#FFFFFF"/><rect x="2" y="9" width="1" height="1" fill="#FFFF00"/><rect x="3" y="9" width="1" height="1" fill="#000000"/><rect x="4" y="9" width="10" height="1" fill="#808000"/><rect x="14" y="9" width="1" height="1" fill="#000000"/><rect x="0" y="10" width="1" height="1" fill="#000000"/><rect x="1" y="10" width="1" height="1" fill="#FFFF00"/><rect x="2" y="10" width="1" height="1" fill="#000000"/><rect x="3" y="10" width="10" height="1" fill="#808000"/><rect x="13" y="10" width="1" height="1" fill="#000000"/><rect x="0" y="11" width="2" height="1" fill="#000000"/><rect x="2" y="11" width="10" height="1" fill="#808000"/><rect x="12" y="11" width="1" height="1" fill="#000000"/><rect x="0" y="12" width="1" height="1" fill="#000000"/><rect x="1" y="12" width="10" height="1" fill="#808000"/><rect x="11" y="12" width="1" height="1" fill="#000000"/><rect x="0" y="13" width="11" height="1" fill="#000000"/></svg>
<svg class="a" style="left:321px;top:51px" width="15" height="9" shape-rendering="crispEdges"><rect x="3" y="0" width="2" height="1" fill="#0000FF"/><rect x="7" y="0" width="2" height="1" fill="#0000FF"/><rect x="3" y="1" width="2" height="1" fill="#0000FF"/><rect x="7" y="1" width="2" height="1" fill="#0000FF"/><rect x="2" y="2" width="2" height="1" fill="#0000FF"/><rect x="6" y="2" width="2" height="1" fill="#0000FF"/><rect x="2" y="3" width="2" height="1" fill="#0000FF"/><rect x="6" y="3" width="2" height="1" fill="#0000FF"/><rect x="2" y="4" width="2" height="1" fill="#0000FF"/><rect x="6" y="4" width="2" height="1" fill="#0000FF"/><rect x="1" y="5" width="2" height="1" fill="#0000FF"/><rect x="5" y="5" width="2" height="1" fill="#0000FF"/><rect x="1" y="6" width="2" height="1" fill="#0000FF"/><rect x="5" y="6" width="2" height="1" fill="#0000FF"/><rect x="9" y="6" width="2" height="1" fill="#0000FF"/><rect x="12" y="6" width="2" height="1" fill="#0000FF"/><rect x="0" y="7" width="2" height="1" fill="#0000FF"/><rect x="4" y="7" width="2" height="1" fill="#0000FF"/><rect x="9" y="7" width="2" height="1" fill="#0000FF"/><rect x="12" y="7" width="2" height="1" fill="#0000FF"/><rect x="0" y="8" width="2" height="1" fill="#0000FF"/><rect x="4" y="8" width="2" height="1" fill="#0000FF"/><rect x="9" y="8" width="2" height="1" fill="#0000FF"/><rect x="12" y="8" width="2" height="1" fill="#0000FF"/></svg>
<svg class="a" style="left:344px;top:51px" width="15" height="9" shape-rendering="crispEdges"><rect x="3" y="0" width="2" height="1" fill="#FF0000"/><rect x="7" y="0" width="2" height="1" fill="#FF0000"/><rect x="3" y="1" width="2" height="1" fill="#FF0000"/><rect x="7" y="1" width="2" height="1" fill="#FF0000"/><rect x="2" y="2" width="2" height="1" fill="#FF0000"/><rect x="6" y="2" width="2" height="1" fill="#FF0000"/><rect x="2" y="3" width="2" height="1" fill="#FF0000"/><rect x="6" y="3" width="2" height="1" fill="#FF0000"/><rect x="2" y="4" width="2" height="1" fill="#FF0000"/><rect x="6" y="4" width="2" height="1" fill="#FF0000"/><rect x="1" y="5" width="2" height="1" fill="#FF0000"/><rect x="5" y="5" width="2" height="1" fill="#FF0000"/><rect x="1" y="6" width="2" height="1" fill="#FF0000"/><rect x="5" y="6" width="2" height="1" fill="#FF0000"/><rect x="9" y="6" width="2" height="1" fill="#FF0000"/><rect x="12" y="6" width="2" height="1" fill="#FF0000"/><rect x="0" y="7" width="2" height="1" fill="#FF0000"/><rect x="4" y="7" width="2" height="1" fill="#FF0000"/><rect x="9" y="7" width="2" height="1" fill="#FF0000"/><rect x="12" y="7" width="2" height="1" fill="#FF0000"/><rect x="0" y="8" width="2" height="1" fill="#FF0000"/><rect x="4" y="8" width="2" height="1" fill="#FF0000"/><rect x="9" y="8" width="2" height="1" fill="#FF0000"/><rect x="12" y="8" width="2" height="1" fill="#FF0000"/></svg>
<svg class="a" style="left:367px;top:48px" width="15" height="12" shape-rendering="crispEdges"><rect x="10" y="0" width="1" height="1" fill="#000000"/><rect x="2" y="1" width="4" height="1" fill="#000000"/><rect x="8" y="1" width="7" height="1" fill="#000000"/><rect x="9" y="2" width="1" height="1" fill="#000000"/><rect x="4" y="3" width="1" height="1" fill="#000080"/><rect x="8" y="3" width="7" height="1" fill="#000000"/><rect x="4" y="4" width="2" height="1" fill="#000080"/><rect x="9" y="4" width="1" height="1" fill="#000000"/><rect x="0" y="5" width="7" height="1" fill="#000080"/><rect x="8" y="5" width="7" height="1" fill="#000000"/><rect x="4" y="6" width="2" height="1" fill="#000080"/><rect x="9" y="6" width="1" height="1" fill="#000000"/><rect x="4" y="7" width="1" height="1" fill="#000080"/><rect x="8" y="7" width="7" height="1" fill="#000000"/><rect x="9" y="8" width="1" height="1" fill="#000000"/><rect x="2" y="9" width="4" height="1" fill="#000000"/><rect x="8" y="9" width="7" height="1" fill="#000000"/><rect x="10" y="10" width="1" height="1" fill="#000000"/><rect x="9" y="11" width="2" height="1" fill="#000000"/></svg>
<svg class="a" style="left:390px;top:47px" width="15" height="13" shape-rendering="crispEdges"><rect x="2" y="0" width="1" height="1" fill="#FFFF00"/><rect x="5" y="0" width="1" height="1" fill="#FFFF00"/><rect x="0" y="1" width="1" height="1" fill="#FFFF00"/><rect x="3" y="1" width="1" height="1" fill="#FFFF00"/><rect x="5" y="1" width="1" height="1" fill="#FFFF00"/><rect x="7" y="1" width="1" height="1" fill="#FFFF00"/><rect x="1" y="2" width="1" height="1" fill="#FFFF00"/><rect x="3" y="2" width="1" height="1" fill="#FFFFFF"/><rect x="4" y="2" width="1" height="1" fill="#FFFF00"/><rect x="5" y="2" width="1" height="1" fill="#FFFFFF"/><rect x="6" y="2" width="1" height="1" fill="#FFFF00"/><rect x="2" y="3" width="1" height="1" fill="#FFFF00"/><rect x="3" y="3" width="1" height="1" fill="#FFFFFF"/><rect x="4" y="3" width="1" height="1" fill="#FFFF00"/><rect x="5" y="3" width="1" height="1" fill="#FFFFFF"/><rect x="6" y="3" width="1" height="1" fill="#FFFF00"/><rect x="7" y="3" width="7" height="1" fill="#000000"/><rect x="0" y="4" width="2" height="1" fill="#FFFF00"/><rect x="2" y="4" width="1" height="1" fill="#FFFFFF"/><rect x="3" y="4" width="1" height="1" fill="#FFFF00"/><rect x="4" y="4" width="1" height="1" fill="#FFFFFF"/><rect x="5" y="4" width="1" height="1" fill="#FFFF00"/><rect x="6" y="4" width="1" height="1" fill="#FFFFFF"/><rect x="7" y="4" width="1" height="1" fill="#FFFF00"/><rect x="8" y="4" width="1" height="1" fill="#FFFFFF"/><rect x="9" y="4" width="1" height="1" fill="#FFFF00"/><rect x="10" y="4" width="1" height="1" fill="#FFFFFF"/><rect x="11" y="4" width="1" height="1" fill="#FFFF00"/><rect x="12" y="4" width="1" height="1" fill="#FFFFFF"/><rect x="13" y="4" width="1" height="1" fill="#000000"/><rect x="2" y="5" width="1" height="1" fill="#FFFF00"/><rect x="3" y="5" width="1" height="1" fill="#FFFFFF"/><rect x="4" y="5" width="1" height="1" fill="#FFFF00"/><rect x="5" y="5" width="1" height="1" fill="#FFFFFF"/><rect x="6" y="5" width="1" height="1" fill="#FFFF00"/><rect x="7" y="5" width="1" height="1" fill="#FFFFFF"/><rect x="8" y="5" width="1" height="1" fill="#FFFF00"/><rect x="9" y="5" width="1" height="1" fill="#FFFFFF"/><rect x="10" y="5" width="1" height="1" fill="#FFFF00"/><rect x="11" y="5" width="1" height="1" fill="#FFFFFF"/><rect x="12" y="5" width="1" height="1" fill="#FFFF00"/><rect x="13" y="5" width="2" height="1" fill="#000000"/><rect x="1" y="6" width="1" height="1" fill="#FFFF00"/><rect x="2" y="6" width="1" height="1" fill="#000000"/><rect x="3" y="6" width="1" height="1" fill="#FFFFFF"/><rect x="4" y="6" width="1" height="1" fill="#FFFF00"/><rect x="5" y="6" width="1" height="1" fill="#FFFFFF"/><rect x="6" y="6" width="1" height="1" fill="#FFFF00"/><rect x="7" y="6" width="1" height="1" fill="#FFFFFF"/><rect x="8" y="6" width="1" height="1" fill="#FFFF00"/><rect x="9" y="6" width="1" height="1" fill="#FFFFFF"/><rect x="10" y="6" width="1" height="1" fill="#FFFF00"/><rect x="11" y="6" width="1" height="1" fill="#FFFFFF"/><rect x="12" y="6" width="1" height="1" fill="#FFFF00"/><rect x="13" y="6" width="2" height="1" fill="#000000"/><rect x="0" y="7" width="1" height="1" fill="#FFFF00"/><rect x="2" y="7" width="1" height="1" fill="#000000"/><rect x="3" y="7" width="1" height="1" fill="#FFFF00"/><rect x="4" y="7" width="1" height="1" fill="#FFFFFF"/><rect x="5" y="7" width="1" height="1" fill="#FFFF00"/><rect x="6" y="7" width="1" height="1" fill="#FFFFFF"/><rect x="7" y="7" width="1" height="1" fill="#FFFF00"/><rect x="8" y="7" width="1" height="1" fill="#FFFFFF"/><rect x="9" y="7" width="1" height="1" fill="#FFFF00"/><rect x="10" y="7" width="1" height="1" fill="#FFFFFF"/><rect x="11" y="7" width="1" height="1" fill="#FFFF00"/><rect x="12" y="7" width="1" height="1" fill="#FFFFFF"/><rect x="13" y="7" width="2" height="1" fill="#000000"/><rect x="2" y="8" width="1" height="1" fill="#000000"/><rect x="3" y="8" width="1" height="1" fill="#FFFFFF"/><rect x="4" y="8" width="1" height="1" fill="#FFFF00"/><rect x="5" y="8" width="1" height="1" fill="#FFFFFF"/><rect x="6" y="8" width="1" height="1" fill="#FFFF00"/><rect x="7" y="8" width="1" height="1" fill="#FFFFFF"/><rect x="8" y="8" width="1" height="1" fill="#FFFF00"/><rect x="9" y="8" width="1" height="1" fill="#FFFFFF"/><rect x="10" y="8" width="1" height="1" fill="#FFFF00"/><rect x="11" y="8" width="2" height="1" fill="#000000"/><rect x="13" y="8" width="1" height="1" fill="#FFFFFF"/><rect x="14" y="8" width="1" height="1" fill="#000000"/><rect x="2" y="9" width="1" height="1" fill="#000000"/><rect x="3" y="9" width="1" height="1" fill="#FFFF00"/><rect x="4" y="9" width="1" height="1" fill="#FFFFFF"/><rect x="5" y="9" width="1" height="1" fill="#FFFF00"/><rect x="6" y="9" width="1" height="1" fill="#FFFFFF"/><rect x="7" y="9" width="1" height="1" fill="#FFFF00"/><rect x="8" y="9" width="1" height="1" fill="#FFFFFF"/><rect x="9" y="9" width="1" height="1" fill="#FFFF00"/><rect x="10" y="9" width="1" height="1" fill="#000000"/><rect x="11" y="9" width="1" height="1" fill="#FFFFFF"/><rect x="12" y="9" width="3" height="1" fill="#000000"/><rect x="2" y="10" width="1" height="1" fill="#000000"/><rect x="3" y="10" width="1" height="1" fill="#FFFFFF"/><rect x="4" y="10" width="1" height="1" fill="#FFFF00"/><rect x="5" y="10" width="1" height="1" fill="#FFFFFF"/><rect x="6" y="10" width="1" height="1" fill="#FFFF00"/><rect x="7" y="10" width="1" height="1" fill="#FFFFFF"/><rect x="8" y="10" width="1" height="1" fill="#FFFF00"/><rect x="9" y="10" width="1" height="1" fill="#FFFFFF"/><rect x="10" y="10" width="1" height="1" fill="#FFFF00"/><rect x="11" y="10" width="4" height="1" fill="#000000"/><rect x="2" y="11" width="13" height="1" fill="#000000"/><rect x="3" y="12" width="12" height="1" fill="#000000"/></svg>
<svg class="a" style="left:418px;top:48px" width="16" height="13" shape-rendering="crispEdges"><rect x="8" y="0" width="1" height="1" fill="#808080"/><rect x="4" y="1" width="2" height="1" fill="#FFFF00"/><rect x="8" y="1" width="2" height="1" fill="#FFFFFF"/><rect x="10" y="1" width="1" height="1" fill="#000000"/><rect x="12" y="1" width="2" height="1" fill="#FFFF00"/><rect x="3" y="2" width="4" height="1" fill="#FFFF00"/><rect x="8" y="2" width="2" height="1" fill="#FFFFFF"/><rect x="10" y="2" width="2" height="1" fill="#000000"/><rect x="12" y="2" width="2" height="1" fill="#FFFF00"/><rect x="14" y="2" width="1" height="1" fill="#000000"/><rect x="2" y="3" width="1" height="1" fill="#000000"/><rect x="3" y="3" width="1" height="1" fill="#FFFF00"/><rect x="4" y="3" width="2" height="1" fill="#FFFFFF"/><rect x="6" y="3" width="1" height="1" fill="#FFFF00"/><rect x="8" y="3" width="2" height="1" fill="#FFFFFF"/><rect x="10" y="3" width="1" height="1" fill="#000000"/><rect x="11" y="3" width="2" height="1" fill="#FFFF00"/><rect x="13" y="3" width="2" height="1" fill="#000000"/><rect x="0" y="4" width="2" height="1" fill="#808000"/><rect x="2" y="4" width="1" height="1" fill="#FFFF00"/><rect x="3" y="4" width="2" height="1" fill="#FFFFFF"/><rect x="6" y="4" width="1" height="1" fill="#000000"/><rect x="7" y="4" width="3" height="1" fill="#FFFFFF"/><rect x="10" y="4" width="1" height="1" fill="#000000"/><rect x="11" y="4" width="1" height="1" fill="#000080"/><rect x="12" y="4" width="2" height="1" fill="#FFFF00"/><rect x="14" y="4" width="1" height="1" fill="#808000"/><rect x="15" y="4" width="1" height="1" fill="#000000"/><rect x="0" y="5" width="2" height="1" fill="#808000"/><rect x="2" y="5" width="1" height="1" fill="#FFFFFF"/><rect x="3" y="5" width="1" height="1" fill="#FFFF00"/><rect x="4" y="5" width="1" height="1" fill="#FFFFFF"/><rect x="7" y="5" width="4" height="1" fill="#000000"/><rect x="12" y="5" width="1" height="1" fill="#FFFF00"/><rect x="13" y="5" width="1" height="1" fill="#FFFFFF"/><rect x="14" y="5" width="1" height="1" fill="#808000"/><rect x="15" y="5" width="1" height="1" fill="#000000"/><rect x="0" y="6" width="1" height="1" fill="#000000"/><rect x="1" y="6" width="1" height="1" fill="#808000"/><rect x="2" y="6" width="1" height="1" fill="#FFFF00"/><rect x="3" y="6" width="2" height="1" fill="#FFFFFF"/><rect x="5" y="6" width="8" height="1" fill="#FFFF00"/><rect x="13" y="6" width="2" height="1" fill="#808000"/><rect x="15" y="6" width="1" height="1" fill="#000000"/><rect x="1" y="7" width="1" height="1" fill="#000000"/><rect x="2" y="7" width="1" height="1" fill="#808000"/><rect x="3" y="7" width="2" height="1" fill="#FFFFFF"/><rect x="5" y="7" width="6" height="1" fill="#808000"/><rect x="11" y="7" width="1" height="1" fill="#FFFFFF"/><rect x="12" y="7" width="1" height="1" fill="#FFFF00"/><rect x="13" y="7" width="1" height="1" fill="#808000"/><rect x="14" y="7" width="1" height="1" fill="#000000"/><rect x="2" y="8" width="2" height="1" fill="#FFFF00"/><rect x="4" y="8" width="1" height="1" fill="#000000"/><rect x="5" y="8" width="1" height="1" fill="#FFFFFF"/><rect x="6" y="8" width="1" height="1" fill="#000000"/><rect x="7" y="8" width="1" height="1" fill="#808000"/><rect x="8" y="8" width="1" height="1" fill="#FFFFFF"/><rect x="9" y="8" width="2" height="1" fill="#000000"/><rect x="11" y="8" width="2" height="1" fill="#FFFF00"/><rect x="13" y="8" width="1" height="1" fill="#808000"/><rect x="14" y="8" width="1" height="1" fill="#000000"/><rect x="2" y="9" width="2" height="1" fill="#FFFF00"/><rect x="4" y="9" width="1" height="1" fill="#000000"/><rect x="5" y="9" width="2" height="1" fill="#FFFF00"/><rect x="7" y="9" width="1" height="1" fill="#000000"/><rect x="8" y="9" width="1" height="1" fill="#FFFFFF"/><rect x="9" y="9" width="2" height="1" fill="#FFFF00"/><rect x="11" y="9" width="2" height="1" fill="#808000"/><rect x="13" y="9" width="2" height="1" fill="#000000"/><rect x="2" y="10" width="2" height="1" fill="#FFFF00"/><rect x="4" y="10" width="1" height="1" fill="#000000"/><rect x="5" y="10" width="1" height="1" fill="#FFFF00"/><rect x="6" y="10" width="1" height="1" fill="#808000"/><rect x="7" y="10" width="2" height="1" fill="#000000"/><rect x="9" y="10" width="1" height="1" fill="#FFFF00"/><rect x="10" y="10" width="2" height="1" fill="#808000"/><rect x="12" y="10" width="2" height="1" fill="#000000"/><rect x="3" y="11" width="2" height="1" fill="#000000"/><rect x="6" y="11" width="2" height="1" fill="#808000"/><rect x="8" y="11" width="2" height="1" fill="#000000"/><rect x="11" y="11" width="2" height="1" fill="#000000"/><rect x="7" y="12" width="3" height="1" fill="#000000"/></svg>
<svg class="a" style="left:441px;top:48px" width="16" height="13" shape-rendering="crispEdges"><rect x="11" y="0" width="3" height="1" fill="#000000"/><rect x="15" y="0" width="1" height="1" fill="#000080"/><rect x="8" y="1" width="3" height="1" fill="#000000"/><rect x="14" y="1" width="1" height="1" fill="#000000"/><rect x="15" y="1" width="1" height="1" fill="#000080"/><rect x="0" y="2" width="8" height="1" fill="#000000"/><rect x="9" y="2" width="1" height="1" fill="#FFFFFF"/><rect x="10" y="2" width="1" height="1" fill="#000000"/><rect x="13" y="2" width="2" height="1" fill="#000000"/><rect x="15" y="2" width="1" height="1" fill="#000080"/><rect x="0" y="3" width="1" height="1" fill="#000000"/><rect x="1" y="3" width="6" height="1" fill="#FFFFFF"/><rect x="7" y="3" width="1" height="1" fill="#000000"/><rect x="8" y="3" width="1" height="1" fill="#FFFFFF"/><rect x="9" y="3" width="1" height="1" fill="#000000"/><rect x="10" y="3" width="1" height="1" fill="#FFFFFF"/><rect x="11" y="3" width="1" height="1" fill="#000000"/><rect x="13" y="3" width="1" height="1" fill="#000000"/><rect x="0" y="4" width="1" height="1" fill="#000000"/><rect x="1" y="4" width="5" height="1" fill="#FFFFFF"/><rect x="6" y="4" width="1" height="1" fill="#000000"/><rect x="7" y="4" width="1" height="1" fill="#FFFFFF"/><rect x="8" y="4" width="1" height="1" fill="#000000"/><rect x="9" y="4" width="1" height="1" fill="#FFFFFF"/><rect x="10" y="4" width="1" height="1" fill="#000000"/><rect x="11" y="4" width="1" height="1" fill="#FFFFFF"/><rect x="12" y="4" width="1" height="1" fill="#000000"/><rect x="0" y="5" width="1" height="1" fill="#000000"/><rect x="1" y="5" width="1" height="1" fill="#FFFFFF"/><rect x="2" y="5" width="4" height="1" fill="#000000"/><rect x="6" y="5" width="1" height="1" fill="#FFFFFF"/><rect x="7" y="5" width="1" height="1" fill="#000000"/><rect x="8" y="5" width="1" height="1" fill="#FFFFFF"/><rect x="9" y="5" width="1" height="1" fill="#000000"/><rect x="10" y="5" width="1" height="1" fill="#FFFFFF"/><rect x="11" y="5" width="1" height="1" fill="#000000"/><rect x="0" y="6" width="1" height="1" fill="#000000"/><rect x="1" y="6" width="7" height="1" fill="#FFFFFF"/><rect x="8" y="6" width="1" height="1" fill="#000000"/><rect x="9" y="6" width="1" height="1" fill="#FFFFFF"/><rect x="10" y="6" width="2" height="1" fill="#000000"/><rect x="0" y="7" width="1" height="1" fill="#000000"/><rect x="1" y="7" width="8" height="1" fill="#FFFFFF"/><rect x="9" y="7" width="3" height="1" fill="#000000"/><rect x="0" y="8" width="1" height="1" fill="#000000"/><rect x="1" y="8" width="1" height="1" fill="#FFFFFF"/><rect x="2" y="8" width="8" height="1" fill="#000000"/><rect x="10" y="8" width="1" height="1" fill="#FFFFFF"/><rect x="11" y="8" width="1" height="1" fill="#000000"/><rect x="0" y="9" width="1" height="1" fill="#000000"/><rect x="1" y="9" width="10" height="1" fill="#FFFFFF"/><rect x="11" y="9" width="1" height="1" fill="#000000"/><rect x="0" y="10" width="1" height="1" fill="#000000"/><rect x="1" y="10" width="1" height="1" fill="#FFFFFF"/><rect x="2" y="10" width="8" height="1" fill="#000000"/><rect x="10" y="10" width="1" height="1" fill="#FFFFFF"/><rect x="11" y="10" width="1" height="1" fill="#000000"/><rect x="0" y="11" width="1" height="1" fill="#000000"/><rect x="1" y="11" width="10" height="1" fill="#FFFFFF"/><rect x="11" y="11" width="1" height="1" fill="#000000"/><rect x="0" y="12" width="12" height="1" fill="#000000"/></svg>
<svg class="a" style="left:466px;top:49px" width="13" height="11" shape-rendering="crispEdges"><rect x="5" y="0" width="2" height="1" fill="#000080"/><rect x="5" y="1" width="3" height="1" fill="#000080"/><rect x="4" y="2" width="1" height="1" fill="#000080"/><rect x="6" y="2" width="2" height="1" fill="#000080"/><rect x="4" y="3" width="1" height="1" fill="#000080"/><rect x="6" y="3" width="3" height="1" fill="#000080"/><rect x="3" y="4" width="1" height="1" fill="#000080"/><rect x="6" y="4" width="3" height="1" fill="#000080"/><rect x="3" y="5" width="7" height="1" fill="#000080"/><rect x="2" y="6" width="1" height="1" fill="#000080"/><rect x="7" y="6" width="3" height="1" fill="#000080"/><rect x="2" y="7" width="1" height="1" fill="#000080"/><rect x="8" y="7" width="3" height="1" fill="#000080"/><rect x="1" y="8" width="1" height="1" fill="#000080"/><rect x="8" y="8" width="3" height="1" fill="#000080"/><rect x="0" y="9" width="4" height="1" fill="#000080"/><rect x="7" y="9" width="6" height="1" fill="#000080"/></svg>
<svg class="a" style="left:494px;top:48px" width="14" height="14" shape-rendering="crispEdges"><rect x="1" y="0" width="1" height="1" fill="#000000"/><rect x="4" y="0" width="3" height="1" fill="#000000"/><rect x="10" y="0" width="2" height="1" fill="#000000"/><rect x="0" y="1" width="1" height="1" fill="#000000"/><rect x="2" y="1" width="1" height="1" fill="#000000"/><rect x="4" y="1" width="1" height="1" fill="#000000"/><rect x="7" y="1" width="1" height="1" fill="#000000"/><rect x="9" y="1" width="1" height="1" fill="#000000"/><rect x="12" y="1" width="1" height="1" fill="#000000"/><rect x="0" y="2" width="3" height="1" fill="#000000"/><rect x="4" y="2" width="3" height="1" fill="#000000"/><rect x="9" y="2" width="1" height="1" fill="#000000"/><rect x="0" y="3" width="1" height="1" fill="#000000"/><rect x="2" y="3" width="1" height="1" fill="#000000"/><rect x="4" y="3" width="1" height="1" fill="#000000"/><rect x="7" y="3" width="1" height="1" fill="#000000"/><rect x="9" y="3" width="1" height="1" fill="#000000"/><rect x="12" y="3" width="1" height="1" fill="#000000"/><rect x="13" y="3" width="1" height="1" fill="#000080"/><rect x="0" y="4" width="1" height="1" fill="#000000"/><rect x="2" y="4" width="1" height="1" fill="#000000"/><rect x="4" y="4" width="3" height="1" fill="#000000"/><rect x="10" y="4" width="2" height="1" fill="#000000"/><rect x="12" y="4" width="1" height="1" fill="#000080"/><rect x="11" y="5" width="2" height="1" fill="#000080"/><rect x="10" y="6" width="2" height="1" fill="#000080"/><rect x="0" y="7" width="1" height="1" fill="#000080"/><rect x="9" y="7" width="2" height="1" fill="#000080"/><rect x="0" y="8" width="2" height="1" fill="#000080"/><rect x="8" y="8" width="2" height="1" fill="#000080"/><rect x="0" y="9" width="3" height="1" fill="#000080"/><rect x="7" y="9" width="3" height="1" fill="#000080"/><rect x="1" y="10" width="3" height="1" fill="#000080"/><rect x="6" y="10" width="3" height="1" fill="#000080"/><rect x="2" y="11" width="6" height="1" fill="#000080"/><rect x="3" y="12" width="4" height="1" fill="#000080"/><rect x="4" y="13" width="2" height="1" fill="#000080"/></svg>
<svg class="a" style="left:522px;top:48px" width="8" height="14" shape-rendering="crispEdges"><rect x="0" y="0" width="1" height="1" fill="#FF0000"/><rect x="0" y="1" width="2" height="1" fill="#FF0000"/><rect x="0" y="2" width="3" height="1" fill="#FF0000"/><rect x="0" y="3" width="4" height="1" fill="#FF0000"/><rect x="0" y="4" width="5" height="1" fill="#FF0000"/><rect x="0" y="5" width="6" height="1" fill="#FF0000"/><rect x="0" y="6" width="7" height="1" fill="#FF0000"/><rect x="0" y="7" width="7" height="1" fill="#FF0000"/><rect x="0" y="8" width="6" height="1" fill="#FF0000"/><rect x="0" y="9" width="5" height="1" fill="#FF0000"/><rect x="0" y="10" width="4" height="1" fill="#FF0000"/><rect x="0" y="11" width="3" height="1" fill="#FF0000"/><rect x="0" y="12" width="2" height="1" fill="#FF0000"/><rect x="0" y="13" width="1" height="1" fill="#FF0000"/></svg>
<svg class="a" style="left:542px;top:51px" width="10" height="10" shape-rendering="crispEdges"><rect x="1" y="1" width="4" height="1" fill="#FFFFFF"/><rect x="6" y="1" width="4" height="1" fill="#FFFFFF"/><rect x="1" y="2" width="4" height="1" fill="#FFFFFF"/><rect x="6" y="2" width="4" height="1" fill="#FFFFFF"/><rect x="1" y="3" width="4" height="1" fill="#FFFFFF"/><rect x="6" y="3" width="4" height="1" fill="#FFFFFF"/><rect x="1" y="4" width="4" height="1" fill="#FFFFFF"/><rect x="6" y="4" width="4" height="1" fill="#FFFFFF"/><rect x="1" y="5" width="4" height="1" fill="#FFFFFF"/><rect x="6" y="5" width="4" height="1" fill="#FFFFFF"/><rect x="1" y="6" width="4" height="1" fill="#FFFFFF"/><rect x="6" y="6" width="4" height="1" fill="#FFFFFF"/><rect x="1" y="7" width="4" height="1" fill="#FFFFFF"/><rect x="6" y="7" width="4" height="1" fill="#FFFFFF"/><rect x="1" y="8" width="4" height="1" fill="#FFFFFF"/><rect x="6" y="8" width="4" height="1" fill="#FFFFFF"/><rect x="1" y="9" width="4" height="1" fill="#FFFFFF"/><rect x="6" y="9" width="4" height="1" fill="#FFFFFF"/></svg><svg class="a" style="left:542px;top:51px" width="9" height="9" shape-rendering="crispEdges"><rect x="0" y="0" width="4" height="1" fill="#808080"/><rect x="5" y="0" width="4" height="1" fill="#808080"/><rect x="0" y="1" width="4" height="1" fill="#808080"/><rect x="5" y="1" width="4" height="1" fill="#808080"/><rect x="0" y="2" width="4" height="1" fill="#808080"/><rect x="5" y="2" width="4" height="1" fill="#808080"/><rect x="0" y="3" width="4" height="1" fill="#808080"/><rect x="5" y="3" width="4" height="1" fill="#808080"/><rect x="0" y="4" width="4" height="1" fill="#808080"/><rect x="5" y="4" width="4" height="1" fill="#808080"/><rect x="0" y="5" width="4" height="1" fill="#808080"/><rect x="5" y="5" width="4" height="1" fill="#808080"/><rect x="0" y="6" width="4" height="1" fill="#808080"/><rect x="5" y="6" width="4" height="1" fill="#808080"/><rect x="0" y="7" width="4" height="1" fill="#808080"/><rect x="5" y="7" width="4" height="1" fill="#808080"/><rect x="0" y="8" width="4" height="1" fill="#808080"/><rect x="5" y="8" width="4" height="1" fill="#808080"/></svg>
<svg class="a" style="left:566px;top:51px" width="10" height="10" shape-rendering="crispEdges"><rect x="2" y="1" width="7" height="1" fill="#FFFFFF"/><rect x="1" y="2" width="9" height="1" fill="#FFFFFF"/><rect x="1" y="3" width="9" height="1" fill="#FFFFFF"/><rect x="1" y="4" width="9" height="1" fill="#FFFFFF"/><rect x="1" y="5" width="9" height="1" fill="#FFFFFF"/><rect x="1" y="6" width="9" height="1" fill="#FFFFFF"/><rect x="1" y="7" width="9" height="1" fill="#FFFFFF"/><rect x="1" y="8" width="9" height="1" fill="#FFFFFF"/><rect x="2" y="9" width="7" height="1" fill="#FFFFFF"/></svg><svg class="a" style="left:566px;top:51px" width="9" height="9" shape-rendering="crispEdges"><rect x="1" y="0" width="7" height="1" fill="#808080"/><rect x="0" y="1" width="9" height="1" fill="#808080"/><rect x="0" y="2" width="9" height="1" fill="#808080"/><rect x="0" y="3" width="9" height="1" fill="#808080"/><rect x="0" y="4" width="9" height="1" fill="#808080"/><rect x="0" y="5" width="9" height="1" fill="#808080"/><rect x="0" y="6" width="9" height="1" fill="#808080"/><rect x="0" y="7" width="9" height="1" fill="#808080"/><rect x="1" y="8" width="7" height="1" fill="#808080"/></svg>
<svg class="a" style="left:592px;top:48px" width="16" height="16" shape-rendering="crispEdges"><rect x="1" y="1" width="6" height="1" fill="#FFFFFF"/><rect x="1" y="2" width="1" height="1" fill="#FFFFFF"/><rect x="1" y="3" width="1" height="1" fill="#FFFFFF"/><rect x="8" y="3" width="8" height="1" fill="#FFFFFF"/><rect x="1" y="4" width="1" height="1" fill="#FFFFFF"/><rect x="1" y="5" width="1" height="1" fill="#FFFFFF"/><rect x="10" y="5" width="6" height="1" fill="#FFFFFF"/><rect x="1" y="6" width="1" height="1" fill="#FFFFFF"/><rect x="1" y="7" width="1" height="1" fill="#FFFFFF"/><rect x="10" y="7" width="6" height="1" fill="#FFFFFF"/><rect x="1" y="8" width="1" height="1" fill="#FFFFFF"/><rect x="1" y="9" width="1" height="1" fill="#FFFFFF"/><rect x="10" y="9" width="6" height="1" fill="#FFFFFF"/><rect x="1" y="10" width="1" height="1" fill="#FFFFFF"/><rect x="1" y="11" width="1" height="1" fill="#FFFFFF"/><rect x="5" y="11" width="1" height="1" fill="#FFFFFF"/><rect x="8" y="11" width="8" height="1" fill="#FFFFFF"/><rect x="1" y="12" width="1" height="1" fill="#FFFFFF"/><rect x="5" y="12" width="2" height="1" fill="#FFFFFF"/><rect x="1" y="13" width="7" height="1" fill="#FFFFFF"/><rect x="5" y="14" width="2" height="1" fill="#FFFFFF"/><rect x="5" y="15" width="1" height="1" fill="#FFFFFF"/></svg><svg class="a" style="left:592px;top:48px" width="15" height="15" shape-rendering="crispEdges"><rect x="0" y="0" width="6" height="1" fill="#808080"/><rect x="0" y="1" width="1" height="1" fill="#808080"/><rect x="0" y="2" width="1" height="1" fill="#808080"/><rect x="7" y="2" width="8" height="1" fill="#808080"/><rect x="0" y="3" width="1" height="1" fill="#808080"/><rect x="0" y="4" width="1" height="1" fill="#808080"/><rect x="9" y="4" width="6" height="1" fill="#808080"/><rect x="0" y="5" width="1" height="1" fill="#808080"/><rect x="0" y="6" width="1" height="1" fill="#808080"/><rect x="9" y="6" width="6" height="1" fill="#808080"/><rect x="0" y="7" width="1" height="1" fill="#808080"/><rect x="0" y="8" width="1" height="1" fill="#808080"/><rect x="9" y="8" width="6" height="1" fill="#808080"/><rect x="0" y="9" width="1" height="1" fill="#808080"/><rect x="0" y="10" width="1" height="1" fill="#808080"/><rect x="4" y="10" width="1" height="1" fill="#808080"/><rect x="7" y="10" width="8" height="1" fill="#808080"/><rect x="0" y="11" width="1" height="1" fill="#808080"/><rect x="4" y="11" width="2" height="1" fill="#808080"/><rect x="0" y="12" width="7" height="1" fill="#808080"/><rect x="4" y="13" width="2" height="1" fill="#808080"/><rect x="4" y="14" width="1" height="1" fill="#808080"/></svg>
<svg class="a" style="left:615px;top:48px" width="17" height="12" shape-rendering="crispEdges"><rect x="1" y="1" width="8" height="1" fill="#FFFFFF"/><rect x="1" y="2" width="1" height="1" fill="#FFFFFF"/><rect x="1" y="3" width="1" height="1" fill="#FFFFFF"/><rect x="3" y="3" width="1" height="1" fill="#FFFFFF"/><rect x="8" y="3" width="9" height="1" fill="#FFFFFF"/><rect x="1" y="4" width="1" height="1" fill="#FFFFFF"/><rect x="3" y="4" width="2" height="1" fill="#FFFFFF"/><rect x="1" y="5" width="5" height="1" fill="#FFFFFF"/><rect x="10" y="5" width="7" height="1" fill="#FFFFFF"/><rect x="3" y="6" width="2" height="1" fill="#FFFFFF"/><rect x="3" y="7" width="1" height="1" fill="#FFFFFF"/><rect x="10" y="7" width="7" height="1" fill="#FFFFFF"/><rect x="10" y="9" width="7" height="1" fill="#FFFFFF"/><rect x="8" y="11" width="9" height="1" fill="#FFFFFF"/></svg><svg class="a" style="left:615px;top:48px" width="16" height="11" shape-rendering="crispEdges"><rect x="0" y="0" width="8" height="1" fill="#808080"/><rect x="0" y="1" width="1" height="1" fill="#808080"/><rect x="0" y="2" width="1" height="1" fill="#808080"/><rect x="2" y="2" width="1" height="1" fill="#808080"/><rect x="7" y="2" width="9" height="1" fill="#808080"/><rect x="0" y="3" width="1" height="1" fill="#808080"/><rect x="2" y="3" width="2" height="1" fill="#808080"/><rect x="0" y="4" width="5" height="1" fill="#808080"/><rect x="9" y="4" width="7" height="1" fill="#808080"/><rect x="2" y="5" width="2" height="1" fill="#808080"/><rect x="2" y="6" width="1" height="1" fill="#808080"/><rect x="9" y="6" width="7" height="1" fill="#808080"/><rect x="9" y="8" width="7" height="1" fill="#808080"/><rect x="7" y="10" width="9" height="1" fill="#808080"/></svg>
<svg class="a" style="left:638px;top:48px" width="13" height="13" shape-rendering="crispEdges"><rect x="6" y="0" width="2" height="1" fill="#000000"/><rect x="4" y="1" width="2" height="1" fill="#000000"/><rect x="6" y="1" width="2" height="1" fill="#FFFFFF"/><rect x="8" y="1" width="2" height="1" fill="#000000"/><rect x="3" y="2" width="1" height="1" fill="#000000"/><rect x="4" y="2" width="1" height="1" fill="#FFFFFF"/><rect x="5" y="2" width="1" height="1" fill="#000000"/><rect x="6" y="2" width="2" height="1" fill="#FFFFFF"/><rect x="8" y="2" width="1" height="1" fill="#000000"/><rect x="9" y="2" width="1" height="1" fill="#FFFFFF"/><rect x="10" y="2" width="1" height="1" fill="#000000"/><rect x="3" y="3" width="1" height="1" fill="#000000"/><rect x="4" y="3" width="1" height="1" fill="#FFFFFF"/><rect x="5" y="3" width="1" height="1" fill="#000000"/><rect x="6" y="3" width="2" height="1" fill="#FFFFFF"/><rect x="8" y="3" width="1" height="1" fill="#000000"/><rect x="9" y="3" width="1" height="1" fill="#FFFFFF"/><rect x="10" y="3" width="2" height="1" fill="#000000"/><rect x="3" y="4" width="1" height="1" fill="#000000"/><rect x="4" y="4" width="1" height="1" fill="#FFFFFF"/><rect x="5" y="4" width="1" height="1" fill="#000000"/><rect x="6" y="4" width="2" height="1" fill="#FFFFFF"/><rect x="8" y="4" width="1" height="1" fill="#000000"/><rect x="9" y="4" width="1" height="1" fill="#FFFFFF"/><rect x="10" y="4" width="1" height="1" fill="#000000"/><rect x="11" y="4" width="1" height="1" fill="#FFFFFF"/><rect x="12" y="4" width="1" height="1" fill="#000000"/><rect x="3" y="5" width="1" height="1" fill="#000000"/><rect x="4" y="5" width="1" height="1" fill="#FFFFFF"/><rect x="5" y="5" width="1" height="1" fill="#000000"/><rect x="6" y="5" width="2" height="1" fill="#FFFFFF"/><rect x="8" y="5" width="1" height="1" fill="#000000"/><rect x="9" y="5" width="1" height="1" fill="#FFFFFF"/><rect x="10" y="5" width="1" height="1" fill="#000000"/><rect x="11" y="5" width="1" height="1" fill="#FFFFFF"/><rect x="12" y="5" width="1" height="1" fill="#000000"/><rect x="0" y="6" width="2" height="1" fill="#000000"/><rect x="3" y="6" width="1" height="1" fill="#000000"/><rect x="4" y="6" width="1" height="1" fill="#FFFFFF"/><rect x="5" y="6" width="1" height="1" fill="#000000"/><rect x="6" y="6" width="2" height="1" fill="#FFFFFF"/><rect x="8" y="6" width="1" height="1" fill="#000000"/><rect x="9" y="6" width="1" height="1" fill="#FFFFFF"/><rect x="10" y="6" width="1" height="1" fill="#000000"/><rect x="11" y="6" width="1" height="1" fill="#FFFFFF"/><rect x="12" y="6" width="1" height="1" fill="#000000"/><rect x="0" y="7" width="1" height="1" fill="#000000"/><rect x="1" y="7" width="1" height="1" fill="#FFFFFF"/><rect x="2" y="7" width="2" height="1" fill="#000000"/><rect x="4" y="7" width="8" height="1" fill="#FFFFFF"/><rect x="12" y="7" width="1" height="1" fill="#000000"/><rect x="1" y="8" width="1" height="1" fill="#000000"/><rect x="2" y="8" width="1" height="1" fill="#FFFFFF"/><rect x="3" y="8" width="1" height="1" fill="#000000"/><rect x="4" y="8" width="8" height="1" fill="#FFFFFF"/><rect x="12" y="8" width="1" height="1" fill="#000000"/><rect x="2" y="9" width="1" height="1" fill="#000000"/><rect x="3" y="9" width="9" height="1" fill="#FFFFFF"/><rect x="12" y="9" width="1" height="1" fill="#000000"/><rect x="3" y="10" width="1" height="1" fill="#000000"/><rect x="4" y="10" width="7" height="1" fill="#FFFFFF"/><rect x="11" y="10" width="1" height="1" fill="#000000"/><rect x="4" y="11" width="1" height="1" fill="#000000"/><rect x="5" y="11" width="6" height="1" fill="#FFFFFF"/><rect x="11" y="11" width="1" height="1" fill="#000000"/><rect x="4" y="12" width="8" height="1" fill="#000000"/></svg>
<svg class="a" style="left:660px;top:47px" width="17" height="16" shape-rendering="crispEdges"><rect x="0" y="0" width="1" height="1" fill="#808080"/><rect x="0" y="1" width="2" height="1" fill="#808080"/><rect x="4" y="1" width="3" height="1" fill="#808080"/><rect x="0" y="2" width="3" height="1" fill="#808080"/><rect x="4" y="2" width="1" height="1" fill="#808080"/><rect x="5" y="2" width="1" height="1" fill="#FFFFFF"/><rect x="6" y="2" width="1" height="1" fill="#808080"/><rect x="8" y="2" width="1" height="1" fill="#808080"/><rect x="0" y="3" width="5" height="1" fill="#808080"/><rect x="5" y="3" width="1" height="1" fill="#FFFFFF"/><rect x="6" y="3" width="1" height="1" fill="#808080"/><rect x="7" y="3" width="1" height="1" fill="#FFFFFF"/><rect x="8" y="3" width="2" height="1" fill="#808080"/><rect x="0" y="4" width="4" height="1" fill="#808080"/><rect x="4" y="4" width="2" height="1" fill="#FFFFFF"/><rect x="6" y="4" width="1" height="1" fill="#808080"/><rect x="7" y="4" width="1" height="1" fill="#FFFFFF"/><rect x="8" y="4" width="1" height="1" fill="#808080"/><rect x="9" y="4" width="1" height="1" fill="#FFFFFF"/><rect x="10" y="4" width="1" height="1" fill="#808080"/><rect x="12" y="4" width="2" height="1" fill="#808080"/><rect x="0" y="5" width="1" height="1" fill="#808080"/><rect x="2" y="5" width="2" height="1" fill="#808080"/><rect x="4" y="5" width="2" height="1" fill="#FFFFFF"/><rect x="6" y="5" width="1" height="1" fill="#808080"/><rect x="7" y="5" width="1" height="1" fill="#FFFFFF"/><rect x="8" y="5" width="1" height="1" fill="#808080"/><rect x="9" y="5" width="1" height="1" fill="#FFFFFF"/><rect x="10" y="5" width="2" height="1" fill="#808080"/><rect x="12" y="5" width="1" height="1" fill="#FFFFFF"/><rect x="13" y="5" width="1" height="1" fill="#808080"/><rect x="0" y="6" width="1" height="1" fill="#808080"/><rect x="1" y="6" width="1" height="1" fill="#FFFFFF"/><rect x="2" y="6" width="1" height="1" fill="#808080"/><rect x="3" y="6" width="3" height="1" fill="#FFFFFF"/><rect x="6" y="6" width="1" height="1" fill="#808080"/><rect x="7" y="6" width="1" height="1" fill="#FFFFFF"/><rect x="8" y="6" width="1" height="1" fill="#808080"/><rect x="9" y="6" width="1" height="1" fill="#FFFFFF"/><rect x="10" y="6" width="2" height="1" fill="#808080"/><rect x="12" y="6" width="1" height="1" fill="#FFFFFF"/><rect x="13" y="6" width="2" height="1" fill="#808080"/><rect x="1" y="7" width="1" height="1" fill="#808080"/><rect x="2" y="7" width="7" height="1" fill="#FFFFFF"/><rect x="9" y="7" width="1" height="1" fill="#808080"/><rect x="10" y="7" width="1" height="1" fill="#FFFFFF"/><rect x="11" y="7" width="1" height="1" fill="#808080"/><rect x="12" y="7" width="1" height="1" fill="#FFFFFF"/><rect x="13" y="7" width="1" height="1" fill="#808080"/><rect x="14" y="7" width="1" height="1" fill="#FFFFFF"/><rect x="15" y="7" width="1" height="1" fill="#808080"/><rect x="2" y="8" width="1" height="1" fill="#808080"/><rect x="3" y="8" width="5" height="1" fill="#FFFFFF"/><rect x="8" y="8" width="1" height="1" fill="#808080"/><rect x="9" y="8" width="2" height="1" fill="#FFFFFF"/><rect x="11" y="8" width="1" height="1" fill="#808080"/><rect x="12" y="8" width="1" height="1" fill="#FFFFFF"/><rect x="13" y="8" width="1" height="1" fill="#808080"/><rect x="14" y="8" width="1" height="1" fill="#FFFFFF"/><rect x="15" y="8" width="1" height="1" fill="#808080"/><rect x="3" y="9" width="1" height="1" fill="#808080"/><rect x="4" y="9" width="2" height="1" fill="#FFFFFF"/><rect x="6" y="9" width="1" height="1" fill="#808080"/><rect x="7" y="9" width="2" height="1" fill="#FFFFFF"/><rect x="9" y="9" width="1" height="1" fill="#808080"/><rect x="10" y="9" width="5" height="1" fill="#FFFFFF"/><rect x="15" y="9" width="1" height="1" fill="#808080"/><rect x="3" y="10" width="1" height="1" fill="#808080"/><rect x="4" y="10" width="2" height="1" fill="#FFFFFF"/><rect x="6" y="10" width="1" height="1" fill="#808080"/><rect x="7" y="10" width="1" height="1" fill="#FFFFFF"/><rect x="8" y="10" width="1" height="1" fill="#808080"/><rect x="9" y="10" width="6" height="1" fill="#FFFFFF"/><rect x="15" y="10" width="1" height="1" fill="#808080"/><rect x="16" y="10" width="1" height="1" fill="#FFFFFF"/><rect x="4" y="11" width="4" height="1" fill="#808080"/><rect x="8" y="11" width="7" height="1" fill="#FFFFFF"/><rect x="15" y="11" width="1" height="1" fill="#808080"/><rect x="16" y="11" width="1" height="1" fill="#FFFFFF"/><rect x="8" y="12" width="1" height="1" fill="#808080"/><rect x="9" y="12" width="6" height="1" fill="#FFFFFF"/><rect x="15" y="12" width="1" height="1" fill="#808080"/><rect x="16" y="12" width="1" height="1" fill="#FFFFFF"/><rect x="9" y="13" width="1" height="1" fill="#808080"/><rect x="10" y="13" width="5" height="1" fill="#FFFFFF"/><rect x="15" y="13" width="1" height="1" fill="#808080"/><rect x="16" y="13" width="1" height="1" fill="#FFFFFF"/><rect x="9" y="14" width="7" height="1" fill="#808080"/><rect x="16" y="14" width="1" height="1" fill="#FFFFFF"/><rect x="10" y="15" width="7" height="1" fill="#FFFFFF"/></svg>
<svg class="a" style="left:646px;top:94px" width="16" height="9" shape-rendering="crispEdges"><rect x="6" y="0" width="2" height="1" fill="#000000"/><rect x="6" y="1" width="1" height="1" fill="#000000"/><rect x="7" y="1" width="1" height="1" fill="#FF0000"/><rect x="8" y="1" width="2" height="1" fill="#000000"/><rect x="6" y="2" width="1" height="1" fill="#000000"/><rect x="7" y="2" width="3" height="1" fill="#FF0000"/><rect x="10" y="2" width="2" height="1" fill="#000000"/><rect x="0" y="3" width="7" height="1" fill="#000000"/><rect x="7" y="3" width="5" height="1" fill="#FF0000"/><rect x="12" y="3" width="2" height="1" fill="#000000"/><rect x="0" y="4" width="1" height="1" fill="#000000"/><rect x="1" y="4" width="13" height="1" fill="#FF0000"/><rect x="14" y="4" width="2" height="1" fill="#000000"/><rect x="0" y="5" width="7" height="1" fill="#000000"/><rect x="7" y="5" width="5" height="1" fill="#FF0000"/><rect x="12" y="5" width="2" height="1" fill="#000000"/><rect x="6" y="6" width="1" height="1" fill="#000000"/><rect x="7" y="6" width="3" height="1" fill="#FF0000"/><rect x="10" y="6" width="2" height="1" fill="#000000"/><rect x="6" y="7" width="1" height="1" fill="#000000"/><rect x="7" y="7" width="1" height="1" fill="#FF0000"/><rect x="8" y="7" width="2" height="1" fill="#000000"/><rect x="6" y="8" width="2" height="1" fill="#000000"/></svg>
<svg class="a" style="left:670px;top:90px" width="20" height="17" shape-rendering="crispEdges"><rect x="6" y="2" width="1" height="1" fill="#000000"/><rect x="14" y="2" width="3" height="1" fill="#000000"/><rect x="6" y="3" width="1" height="1" fill="#000000"/><rect x="15" y="3" width="2" height="1" fill="#000000"/><rect x="5" y="4" width="3" height="1" fill="#000000"/><rect x="14" y="4" width="1" height="1" fill="#000000"/><rect x="16" y="4" width="1" height="1" fill="#000000"/><rect x="5" y="5" width="1" height="1" fill="#000000"/><rect x="7" y="5" width="1" height="1" fill="#000000"/><rect x="4" y="6" width="1" height="1" fill="#000000"/><rect x="8" y="6" width="1" height="1" fill="#000000"/><rect x="13" y="6" width="1" height="1" fill="#000000"/><rect x="4" y="7" width="1" height="1" fill="#000000"/><rect x="8" y="7" width="1" height="1" fill="#000000"/><rect x="13" y="8" width="1" height="1" fill="#000000"/><rect x="6" y="9" width="1" height="1" fill="#000000"/><rect x="14" y="10" width="1" height="1" fill="#000000"/><rect x="16" y="10" width="3" height="1" fill="#808080"/><rect x="5" y="11" width="1" height="1" fill="#000000"/><rect x="16" y="11" width="1" height="1" fill="#808080"/><rect x="19" y="11" width="1" height="1" fill="#808080"/><rect x="12" y="12" width="1" height="1" fill="#000000"/><rect x="16" y="12" width="1" height="1" fill="#808080"/><rect x="19" y="12" width="1" height="1" fill="#808080"/><rect x="6" y="13" width="1" height="1" fill="#000000"/><rect x="12" y="13" width="2" height="1" fill="#000000"/><rect x="16" y="13" width="3" height="1" fill="#808080"/><rect x="8" y="14" width="1" height="1" fill="#000000"/><rect x="10" y="14" width="1" height="1" fill="#000000"/><rect x="12" y="14" width="3" height="1" fill="#000000"/><rect x="16" y="14" width="1" height="1" fill="#808080"/><rect x="19" y="14" width="1" height="1" fill="#808080"/><rect x="12" y="15" width="2" height="1" fill="#000000"/><rect x="16" y="15" width="1" height="1" fill="#808080"/><rect x="19" y="15" width="1" height="1" fill="#808080"/><rect x="12" y="16" width="1" height="1" fill="#000000"/><rect x="16" y="16" width="3" height="1" fill="#808080"/></svg>
<svg class="a" style="left:704px;top:93px" width="12" height="12" shape-rendering="crispEdges"><rect x="7" y="0" width="4" height="1" fill="#000080"/><rect x="7" y="1" width="3" height="1" fill="#000080"/><rect x="1" y="2" width="2" height="1" fill="#000080"/><rect x="7" y="2" width="1" height="1" fill="#000080"/><rect x="9" y="2" width="2" height="1" fill="#000080"/><rect x="1" y="3" width="2" height="1" fill="#000080"/><rect x="7" y="3" width="1" height="1" fill="#000080"/><rect x="9" y="3" width="2" height="1" fill="#000080"/><rect x="0" y="4" width="2" height="1" fill="#000080"/><rect x="10" y="4" width="2" height="1" fill="#000080"/><rect x="0" y="5" width="2" height="1" fill="#000080"/><rect x="10" y="5" width="2" height="1" fill="#000080"/><rect x="0" y="6" width="2" height="1" fill="#000080"/><rect x="10" y="6" width="2" height="1" fill="#000080"/><rect x="0" y="7" width="2" height="1" fill="#000080"/><rect x="10" y="7" width="2" height="1" fill="#000080"/><rect x="1" y="8" width="2" height="1" fill="#000080"/><rect x="9" y="8" width="2" height="1" fill="#000080"/><rect x="2" y="9" width="3" height="1" fill="#000080"/><rect x="7" y="9" width="3" height="1" fill="#000080"/><rect x="3" y="10" width="6" height="1" fill="#000080"/><rect x="4" y="11" width="4" height="1" fill="#000080"/></svg>
<div class="a" style="left:4px;top:67px;width:793px;height:1px;background:#808080"></div>
<div class="a" style="left:4px;top:68px;width:628px;height:1px;background:#404040"></div>
<div class="a" style="left:4px;top:67px;width:1px;height:431px;background:#808080"></div>
<div class="a" style="left:5px;top:68px;width:1px;height:429px;background:#404040"></div>
<div class="a" style="left:632px;top:67px;width:1px;height:431px;background:#fff"></div>
<div class="a" style="left:4px;top:497px;width:793px;height:1px;background:#fff"></div>
<div class="a" style="left:6px;top:69px;width:66px;height:1px;background:#fff"></div>
<div class="a" style="left:6px;top:69px;width:1px;height:22px;background:#fff"></div>
<div class="a" style="left:72px;top:70px;width:1px;height:21px;background:#404040"></div>
<div class="a" style="left:71px;top:70px;width:1px;height:21px;background:#808080"></div>
<div class="a" style="left:73px;top:90px;width:558px;height:1px;background:#fff"></div>
<svg class="a" style="left:14px;top:71px" width="17" height="17" viewBox="0 0 17 17">
<defs><radialGradient id="sg14_71" cx="0.45" cy="0.45" r="0.55"><stop offset="0" stop-color="#D0D0F8"/><stop offset="0.55" stop-color="#6A6AC8"/><stop offset="1" stop-color="#181870"/></radialGradient>
<linearGradient id="xg14_71" x1="0" y1="0" x2="0" y2="1"><stop offset="0" stop-color="#FFFF80"/><stop offset="0.5" stop-color="#FFE000"/><stop offset="1" stop-color="#FF7000"/></linearGradient></defs>
<circle cx="10" cy="6.6" r="5.9" fill="url(#sg14_71)" stroke="#101050" stroke-width="0.9"/>
<path d="M7.8 3.6L12.3 9.4M12.3 3.6L7.8 9.4" stroke="url(#xg14_71)" stroke-width="2.7" stroke-linecap="round"/>
<g shape-rendering="crispEdges"><rect x="0" y="11" width="12" height="6" fill="#000"/><rect x="1" y="12" width="1" height="1" fill="#FFFF00"/><rect x="2" y="12" width="1" height="1" fill="#FFFF00"/><rect x="3" y="12" width="1" height="1" fill="#FFFF00"/><rect x="5" y="12" width="1" height="1" fill="#FFFF00"/><rect x="6" y="12" width="1" height="1" fill="#FFFF00"/><rect x="7" y="12" width="1" height="1" fill="#FFFF00"/><rect x="11" y="12" width="1" height="1" fill="#FFFF00"/><rect x="1" y="13" width="1" height="1" fill="#FFFF00"/><rect x="5" y="13" width="1" height="1" fill="#FFFF00"/><rect x="7" y="13" width="1" height="1" fill="#FFFF00"/><rect x="11" y="13" width="1" height="1" fill="#FFFF00"/><rect x="1" y="14" width="1" height="1" fill="#FFFF00"/><rect x="2" y="14" width="1" height="1" fill="#FFFF00"/><rect x="3" y="14" width="1" height="1" fill="#FFFF00"/><rect x="5" y="14" width="1" height="1" fill="#FFFF00"/><rect x="6" y="14" width="1" height="1" fill="#FFFF00"/><rect x="7" y="14" width="1" height="1" fill="#FFFF00"/><rect x="9" y="14" width="1" height="1" fill="#FFFF00"/><rect x="10" y="14" width="1" height="1" fill="#FFFF00"/><rect x="11" y="14" width="1" height="1" fill="#FFFF00"/><rect x="3" y="15" width="1" height="1" fill="#FFFF00"/><rect x="5" y="15" width="1" height="1" fill="#FFFF00"/><rect x="9" y="15" width="1" height="1" fill="#FFFF00"/><rect x="11" y="15" width="1" height="1" fill="#FFFF00"/><rect x="1" y="16" width="1" height="1" fill="#FFFF00"/><rect x="2" y="16" width="1" height="1" fill="#FFFF00"/><rect x="3" y="16" width="1" height="1" fill="#FFFF00"/><rect x="5" y="16" width="1" height="1" fill="#FFFF00"/><rect x="6" y="16" width="1" height="1" fill="#FFFF00"/><rect x="7" y="16" width="1" height="1" fill="#FFFF00"/><rect x="9" y="16" width="1" height="1" fill="#FFFF00"/><rect x="10" y="16" width="1" height="1" fill="#FFFF00"/><rect x="11" y="16" width="1" height="1" fill="#FFFF00"/></g>
</svg>
<div class="t" style="left:37px;top:74px;letter-spacing:-0.2px">actors</div>
<div class="a" style="left:6px;top:96px;width:33px;height:384px;background:#BEE6FF"></div>
<div class="a" style="left:39px;top:96px;width:576px;height:384px;background:#fff"></div>
<!--CODE--><div class="a" style="left:6px;top:96px;width:609px;height:384px;overflow:hidden">
<div class="ln" style="left:1px;top:1px">83</div>
<div class="code" style="left:34px;top:1px">action patrol_path</div>
<div class="ln" style="left:1px;top:14px">84</div>
<div class="code" style="left:34px;top:14px">{</div>
<div class="ln" style="left:1px;top:27px">85</div>
<div class="code" style="left:34px;top:27px">   actor_init();</div>
<div class="ln" style="left:1px;top:40px">86</div>
<div class="ln" style="left:1px;top:53px">87</div>
<div class="code" style="left:34px;top:53px"><span class="c">   // attach next path</span></div>
<div class="ln" style="left:1px;top:66px">88</div>
<div class="code" style="left:34px;top:66px">   temp.pan = <span class="n">360</span>;</div>
<div class="ln" style="left:1px;top:79px">89</div>
<div class="code" style="left:34px;top:79px">   temp.tilt = <span class="n">180</span>;</div>
<div class="ln" style="left:1px;top:92px">90</div>
<div class="code" style="left:34px;top:92px">   temp.z = <span class="n">1000</span>;</div>
<div class="ln" style="left:1px;top:105px">91</div>
<div class="code" style="left:34px;top:105px">   result = scan_path(my.x,temp);</div>
<div class="ln" style="left:1px;top:118px">92</div>
<div class="code" style="left:34px;top:118px">   if (result == <span class="n">0</span>) { my._MOVEMODE = <span class="n">0</span>; } <span class="c">// no path found</span></div>
<div class="ln" style="left:1px;top:131px">93</div>
<div class="ln" style="left:1px;top:144px">94</div>
<div class="code" style="left:34px;top:144px"><span class="c">   // find first waypoint</span></div>
<div class="ln" style="left:1px;top:157px">95</div>
<div class="code" style="left:34px;top:157px">   ent_waypoint(my._TARGET_X,<span class="n">1</span>);</div>
<div class="ln" style="left:1px;top:170px">96</div>
<div class="ln" style="left:1px;top:183px">97</div>
<div class="code" style="left:34px;top:183px">   while (my._MOVEMODE &gt; <span class="n">0</span>)</div>
<div class="ln" style="left:1px;top:196px">98</div>
<div class="code" style="left:34px;top:196px">   {</div>
<div class="ln" style="left:1px;top:209px">99</div>
<div class="code" style="left:34px;top:209px"><span class="c">      // find direction</span></div>
<div class="ln" style="left:1px;top:222px">100</div>
<div class="code" style="left:34px;top:222px">      temp.x = MY._TARGET_X - MY.X;</div>
<div class="ln" style="left:1px;top:235px">101</div>
<div class="code" style="left:34px;top:235px">      temp.y = MY._TARGET_Y - MY.Y;</div>
<div class="ln" style="left:1px;top:248px">102</div>
<div class="code" style="left:34px;top:248px">      temp.z = <span class="n">0</span>;</div>
<div class="ln" style="left:1px;top:261px">103</div>
<div class="code" style="left:34px;top:261px">      result = vec_to_angle(my_angle,temp);</div>
<div class="ln" style="left:1px;top:274px">104</div>
<div class="ln" style="left:1px;top:287px">105</div>
<div class="code" style="left:34px;top:287px">      force = MY._FORCE;</div>
<div class="ln" style="left:1px;top:300px">106</div>
<div class="ln" style="left:1px;top:313px">107</div>
<div class="code" style="left:34px;top:313px"><span class="c">      // near target? Find next waypoint</span></div>
<div class="ln" style="left:1px;top:326px">108</div>
<div class="code" style="left:34px;top:326px"><span class="c">      // compare radius must exceed the turning cycle!</span></div>
<div class="ln" style="left:1px;top:339px">109</div>
<div class="code" style="left:34px;top:339px">      if (result &lt; <span class="n">25</span>) { ent_nextpoint(my._TARGET_X); }</div>
<div class="ln" style="left:1px;top:352px">110</div>
<div class="ln" style="left:1px;top:365px">111</div>
<div class="code" style="left:34px;top:365px"><span class="c">      // turn and walk towards target</span></div>
<div class="ln" style="left:1px;top:378px">112</div>
<div class="code" style="left:34px;top:378px">      actor_turnto(my_angle.PAN);</div>
</div><!--/CODE-->
<div class="a" style="left:39px;top:96px;width:2px;height:13px;background:#000"></div>
<div class="a checker" style="left:615px;top:96px;width:16px;height:384px"></div>
<div class="btn" style="left:615px;top:96px;width:16px;height:7px"></div>
<div class="btn" style="left:615px;top:103px;width:16px;height:16px"></div>
<svg class="a" style="left:619px;top:109px" width="7" height="4" shape-rendering="crispEdges"><rect x="3" y="0" width="1" height="1" fill="#000"/><rect x="2" y="1" width="3" height="1" fill="#000"/><rect x="1" y="2" width="5" height="1" fill="#000"/><rect x="0" y="3" width="7" height="1" fill="#000"/></svg>
<div class="btn" style="left:615px;top:218px;width:16px;height:35px"></div>
<div class="btn" style="left:615px;top:464px;width:16px;height:16px"></div>
<svg class="a" style="left:619px;top:470px" width="7" height="4" shape-rendering="crispEdges"><rect x="0" y="0" width="7" height="1" fill="#000"/><rect x="1" y="1" width="5" height="1" fill="#000"/><rect x="2" y="2" width="3" height="1" fill="#000"/><rect x="3" y="3" width="1" height="1" fill="#000"/></svg>
<div class="btn" style="left:6px;top:480px;width:7px;height:16px"></div>
<div class="btn" style="left:13px;top:480px;width:16px;height:16px"></div>
<svg class="a" style="left:18px;top:484px" width="4" height="7" shape-rendering="crispEdges"><rect x="3" y="0" width="1" height="1" fill="#000"/><rect x="2" y="1" width="2" height="1" fill="#000"/><rect x="1" y="2" width="3" height="1" fill="#000"/><rect x="0" y="3" width="4" height="1" fill="#000"/><rect x="1" y="4" width="3" height="1" fill="#000"/><rect x="2" y="5" width="2" height="1" fill="#000"/><rect x="3" y="6" width="1" height="1" fill="#000"/></svg>
<div class="btn" style="left:29px;top:480px;width:476px;height:16px"></div>
<div class="a checker" style="left:505px;top:480px;width:94px;height:16px"></div>
<div class="btn" style="left:599px;top:480px;width:16px;height:16px"></div>
<svg class="a" style="left:605px;top:484px" width="4" height="7" shape-rendering="crispEdges"><rect x="0" y="0" width="1" height="1" fill="#000"/><rect x="0" y="1" width="2" height="1" fill="#000"/><rect x="0" y="2" width="3" height="1" fill="#000"/><rect x="0" y="3" width="4" height="1" fill="#000"/><rect x="0" y="4" width="3" height="1" fill="#000"/><rect x="0" y="5" width="2" height="1" fill="#000"/><rect x="0" y="6" width="1" height="1" fill="#000"/></svg>
<div class="a" style="left:633px;top:68px;width:164px;height:1px;background:#fff"></div>
<div class="a" style="left:636px;top:69px;width:1px;height:428px;background:#808080"></div>
<div class="a" style="left:641px;top:77px;width:120px;height:1px;background:#fff"></div>
<div class="a" style="left:641px;top:79px;width:120px;height:1px;background:#808080"></div>
<div class="a" style="left:641px;top:81px;width:120px;height:1px;background:#fff"></div>
<div class="a" style="left:641px;top:83px;width:120px;height:1px;background:#808080"></div>
<div class="btn2" style="left:765px;top:74px;width:11px;height:11px"></div>
<div class="a" style="left:767px;top:76px;width:6px;height:6px;border:1px solid #000;border-top-width:2px"></div>
<div class="btn2" style="left:778px;top:74px;width:11px;height:11px"></div>
<svg class="a" style="left:780px;top:77px" width="7" height="5" shape-rendering="crispEdges"><rect x="0" y="0" width="2" height="1" fill="#000"/><rect x="5" y="0" width="2" height="1" fill="#000"/><rect x="1" y="1" width="2" height="1" fill="#000"/><rect x="4" y="1" width="2" height="1" fill="#000"/><rect x="2" y="2" width="3" height="1" fill="#000"/><rect x="1" y="3" width="2" height="1" fill="#000"/><rect x="4" y="3" width="2" height="1" fill="#000"/><rect x="0" y="4" width="2" height="1" fill="#000"/><rect x="5" y="4" width="2" height="1" fill="#000"/></svg>
<div class="a" style="left:715px;top:133px;width:81px;height:1px;background:#fff"></div>
<div class="a" style="left:637px;top:114px;width:1px;height:382px;background:#fff"></div>
<div class="a" style="left:795px;top:133px;width:1px;height:363px;background:#404040"></div>
<div class="a" style="left:794px;top:134px;width:1px;height:362px;background:#808080"></div>
<div class="a" style="left:633px;top:496px;width:164px;height:1px;background:#808080"></div>
<div class="a" style="left:639px;top:114px;width:75px;height:1px;background:#fff"></div>
<div class="a" style="left:638px;top:115px;width:1px;height:1px;background:#fff"></div>
<div class="a" style="left:714px;top:115px;width:1px;height:18px;background:#404040"></div>
<div class="a" style="left:713px;top:115px;width:1px;height:18px;background:#808080"></div>
<div class="t" style="left:643px;top:117px;letter-spacing:-0.2px">Code Jumper</div>
<div class="a" style="left:716px;top:116px;width:65px;height:1px;background:#fff"></div>
<div class="a" style="left:715px;top:117px;width:1px;height:16px;background:#fff"></div>
<div class="a" style="left:782px;top:117px;width:1px;height:16px;background:#404040"></div>
<div class="a" style="left:781px;top:117px;width:1px;height:16px;background:#808080"></div>
<div class="t" style="left:719px;top:119px;letter-spacing:-0.36px">Element List</div>
<div class="a" style="left:641px;top:137px;width:150px;height:357px;background:#fff;box-shadow:inset 1px 1px 0 #808080,inset 2px 2px 0 #404040,inset -1px -1px 0 #fff,inset -2px -2px 0 #D4D0C8"></div>
<div class="a" style="left:652px;top:153px;width:1px;height:267px;background:repeating-linear-gradient(to bottom,#808080 0 1px,transparent 1px 2px)"></div>
<div class="a" style="left:671px;top:155px;width:1px;height:41px;background:repeating-linear-gradient(to bottom,#808080 0 1px,transparent 1px 2px)"></div>
<div class="a" style="left:681px;top:171px;width:60px;height:16px;background:#D4D0C8"></div>
<div class="a" style="left:658px;top:147px;width:1px;height:1px;background:#808080"></div>
<div class="a" style="left:660px;top:147px;width:1px;height:1px;background:#808080"></div>
<div class="t" style="left:664px;top:141px;letter-spacing:-0.167px">Actions</div>
<div class="a" style="left:673px;top:163px;width:1px;height:1px;background:#808080"></div>
<div class="a" style="left:675px;top:163px;width:1px;height:1px;background:#808080"></div>
<div class="a" style="left:677px;top:163px;width:1px;height:1px;background:#808080"></div>
<div class="a" style="left:679px;top:163px;width:1px;height:1px;background:#808080"></div>
<div class="t" style="left:682px;top:157px">patrol</div>
<div class="a" style="left:673px;top:179px;width:1px;height:1px;background:#808080"></div>
<div class="a" style="left:675px;top:179px;width:1px;height:1px;background:#808080"></div>
<div class="a" style="left:677px;top:179px;width:1px;height:1px;background:#808080"></div>
<div class="a" style="left:679px;top:179px;width:1px;height:1px;background:#808080"></div>
<div class="t" style="left:682px;top:173px;letter-spacing:0.2px">patrol_path</div>
<div class="a" style="left:673px;top:195px;width:1px;height:1px;background:#808080"></div>
<div class="a" style="left:675px;top:195px;width:1px;height:1px;background:#808080"></div>
<div class="a" style="left:677px;top:195px;width:1px;height:1px;background:#808080"></div>
<div class="a" style="left:679px;top:195px;width:1px;height:1px;background:#808080"></div>
<div class="t" style="left:682px;top:189px;letter-spacing:0.091px">actor_follow</div>
<div class="a" style="left:654px;top:211px;width:1px;height:1px;background:#808080"></div>
<div class="a" style="left:656px;top:211px;width:1px;height:1px;background:#808080"></div>
<div class="a" style="left:658px;top:211px;width:1px;height:1px;background:#808080"></div>
<div class="a" style="left:660px;top:211px;width:1px;height:1px;background:#808080"></div>
<div class="t" style="left:663px;top:205px;letter-spacing:-0.167px">Bitmaps</div>
<div class="a" style="left:654px;top:227px;width:1px;height:1px;background:#808080"></div>
<div class="a" style="left:656px;top:227px;width:1px;height:1px;background:#808080"></div>
<div class="a" style="left:658px;top:227px;width:1px;height:1px;background:#808080"></div>
<div class="a" style="left:660px;top:227px;width:1px;height:1px;background:#808080"></div>
<div class="t" style="left:663px;top:221px">Defines</div>
<div class="a" style="left:654px;top:243px;width:1px;height:1px;background:#808080"></div>
<div class="a" style="left:656px;top:243px;width:1px;height:1px;background:#808080"></div>
<div class="a" style="left:658px;top:243px;width:1px;height:1px;background:#808080"></div>
<div class="a" style="left:660px;top:243px;width:1px;height:1px;background:#808080"></div>
<div class="t" style="left:663px;top:237px">Entities</div>
<div class="a" style="left:658px;top:259px;width:1px;height:1px;background:#808080"></div>
<div class="a" style="left:660px;top:259px;width:1px;height:1px;background:#808080"></div>
<div class="t" style="left:663px;top:253px">Functions</div>
<div class="a" style="left:654px;top:275px;width:1px;height:1px;background:#808080"></div>
<div class="a" style="left:656px;top:275px;width:1px;height:1px;background:#808080"></div>
<div class="a" style="left:658px;top:275px;width:1px;height:1px;background:#808080"></div>
<div class="a" style="left:660px;top:275px;width:1px;height:1px;background:#808080"></div>
<div class="t" style="left:663px;top:269px">Materials</div>
<div class="a" style="left:654px;top:291px;width:1px;height:1px;background:#808080"></div>
<div class="a" style="left:656px;top:291px;width:1px;height:1px;background:#808080"></div>
<div class="a" style="left:658px;top:291px;width:1px;height:1px;background:#808080"></div>
<div class="a" style="left:660px;top:291px;width:1px;height:1px;background:#808080"></div>
<div class="t" style="left:663px;top:285px;letter-spacing:-0.2px">Panels</div>
<div class="a" style="left:654px;top:307px;width:1px;height:1px;background:#808080"></div>
<div class="a" style="left:656px;top:307px;width:1px;height:1px;background:#808080"></div>
<div class="a" style="left:658px;top:307px;width:1px;height:1px;background:#808080"></div>
<div class="a" style="left:660px;top:307px;width:1px;height:1px;background:#808080"></div>
<div class="t" style="left:663px;top:301px">Paths</div>
<div class="a" style="left:654px;top:323px;width:1px;height:1px;background:#808080"></div>
<div class="a" style="left:656px;top:323px;width:1px;height:1px;background:#808080"></div>
<div class="a" style="left:658px;top:323px;width:1px;height:1px;background:#808080"></div>
<div class="a" style="left:660px;top:323px;width:1px;height:1px;background:#808080"></div>
<div class="t" style="left:663px;top:317px;letter-spacing:-0.4px">Skills</div>
<div class="a" style="left:654px;top:339px;width:1px;height:1px;background:#808080"></div>
<div class="a" style="left:656px;top:339px;width:1px;height:1px;background:#808080"></div>
<div class="a" style="left:658px;top:339px;width:1px;height:1px;background:#808080"></div>
<div class="a" style="left:660px;top:339px;width:1px;height:1px;background:#808080"></div>
<div class="t" style="left:663px;top:333px;letter-spacing:-0.2px">Sounds</div>
<div class="a" style="left:654px;top:355px;width:1px;height:1px;background:#808080"></div>
<div class="a" style="left:656px;top:355px;width:1px;height:1px;background:#808080"></div>
<div class="a" style="left:658px;top:355px;width:1px;height:1px;background:#808080"></div>
<div class="a" style="left:660px;top:355px;width:1px;height:1px;background:#808080"></div>
<div class="t" style="left:663px;top:349px;letter-spacing:0.286px">Starters</div>
<div class="a" style="left:654px;top:371px;width:1px;height:1px;background:#808080"></div>
<div class="a" style="left:656px;top:371px;width:1px;height:1px;background:#808080"></div>
<div class="a" style="left:658px;top:371px;width:1px;height:1px;background:#808080"></div>
<div class="a" style="left:660px;top:371px;width:1px;height:1px;background:#808080"></div>
<div class="t" style="left:663px;top:365px">Strings</div>
<div class="a" style="left:654px;top:387px;width:1px;height:1px;background:#808080"></div>
<div class="a" style="left:656px;top:387px;width:1px;height:1px;background:#808080"></div>
<div class="a" style="left:658px;top:387px;width:1px;height:1px;background:#808080"></div>
<div class="a" style="left:660px;top:387px;width:1px;height:1px;background:#808080"></div>
<div class="t" style="left:663px;top:381px;letter-spacing:0.75px">Texts</div>
<div class="a" style="left:654px;top:403px;width:1px;height:1px;background:#808080"></div>
<div class="a" style="left:656px;top:403px;width:1px;height:1px;background:#808080"></div>
<div class="a" style="left:658px;top:403px;width:1px;height:1px;background:#808080"></div>
<div class="a" style="left:660px;top:403px;width:1px;height:1px;background:#808080"></div>
<div class="t" style="left:664px;top:397px;letter-spacing:-0.25px">Variables</div>
<div class="a" style="left:654px;top:419px;width:1px;height:1px;background:#808080"></div>
<div class="a" style="left:656px;top:419px;width:1px;height:1px;background:#808080"></div>
<div class="a" style="left:658px;top:419px;width:1px;height:1px;background:#808080"></div>
<div class="a" style="left:660px;top:419px;width:1px;height:1px;background:#808080"></div>
<div class="t" style="left:664px;top:413px;letter-spacing:-0.5px">Views</div>
<div class="a" style="left:648px;top:143px;width:9px;height:9px;background:#fff;border:1px solid #808080"></div>
<div class="a" style="left:650px;top:147px;width:5px;height:1px;background:#000"></div>
<div class="a" style="left:648px;top:255px;width:9px;height:9px;background:#fff;border:1px solid #808080"></div>
<div class="a" style="left:650px;top:259px;width:5px;height:1px;background:#000"></div>
<div class="a" style="left:652px;top:257px;width:1px;height:5px;background:#000"></div>
<div class="a" style="left:4px;top:501px;width:793px;height:1px;background:#808080"></div>
<div class="btn2" style="left:9px;top:506px;width:12px;height:12px"></div>
<svg class="a" style="left:11px;top:509px" width="7" height="5" shape-rendering="crispEdges"><rect x="0" y="0" width="2" height="1" fill="#000"/><rect x="5" y="0" width="2" height="1" fill="#000"/><rect x="1" y="1" width="2" height="1" fill="#000"/><rect x="4" y="1" width="2" height="1" fill="#000"/><rect x="2" y="2" width="3" height="1" fill="#000"/><rect x="1" y="3" width="2" height="1" fill="#000"/><rect x="4" y="3" width="2" height="1" fill="#000"/><rect x="0" y="4" width="2" height="1" fill="#000"/><rect x="5" y="4" width="2" height="1" fill="#000"/></svg>
<div class="btn2" style="left:9px;top:519px;width:12px;height:12px"></div>
<div class="a" style="left:11px;top:521px;width:7px;height:7px;border:1px solid #000;border-top-width:2px"></div>
<div class="a" style="left:12px;top:534px;width:1px;height:70px;background:#fff"></div>
<div class="a" style="left:14px;top:534px;width:1px;height:70px;background:#808080"></div>
<div class="a" style="left:16px;top:534px;width:1px;height:70px;background:#fff"></div>
<div class="a" style="left:18px;top:534px;width:1px;height:70px;background:#808080"></div>
<div class="a" style="left:108px;top:522px;width:688px;height:1px;background:#fff"></div>
<div class="a" style="left:22px;top:503px;width:1px;height:108px;background:#fff"></div>
<div class="a" style="left:795px;top:522px;width:1px;height:89px;background:#404040"></div>
<div class="a" style="left:794px;top:523px;width:1px;height:87px;background:#808080"></div>
<div class="a" style="left:22px;top:610px;width:774px;height:1px;background:#404040"></div>
<div class="a" style="left:23px;top:609px;width:772px;height:1px;background:#808080"></div>
<div class="a" style="left:24px;top:503px;width:83px;height:1px;background:#fff"></div>
<div class="a" style="left:23px;top:504px;width:1px;height:1px;background:#fff"></div>
<div class="a" style="left:107px;top:504px;width:1px;height:18px;background:#404040"></div>
<div class="a" style="left:106px;top:504px;width:1px;height:18px;background:#808080"></div>
<div class="t" style="left:29px;top:506px;letter-spacing:-0.45px">Command Help</div>
<div class="a" style="left:109px;top:504px;width:123px;height:1px;background:#fff"></div>
<div class="a" style="left:108px;top:505px;width:1px;height:17px;background:#fff"></div>
<div class="a" style="left:232px;top:505px;width:1px;height:17px;background:#404040"></div>
<div class="a" style="left:231px;top:505px;width:1px;height:17px;background:#808080"></div>
<div class="t" style="left:112px;top:508px;letter-spacing:-0.14px">Syntax Checker Results</div>
<div class="a" style="left:234px;top:504px;width:41px;height:1px;background:#fff"></div>
<div class="a" style="left:233px;top:505px;width:1px;height:17px;background:#fff"></div>
<div class="a" style="left:275px;top:505px;width:1px;height:17px;background:#404040"></div>
<div class="a" style="left:274px;top:505px;width:1px;height:17px;background:#808080"></div>
<div class="t" style="left:239px;top:508px">Watch</div>
<div class="a" style="left:277px;top:504px;width:44px;height:1px;background:#fff"></div>
<div class="a" style="left:276px;top:505px;width:1px;height:17px;background:#fff"></div>
<div class="a" style="left:321px;top:505px;width:1px;height:17px;background:#404040"></div>
<div class="a" style="left:320px;top:505px;width:1px;height:17px;background:#808080"></div>
<div class="t" style="left:282px;top:508px">Output</div>
<div class="a" style="left:26px;top:529px;width:765px;height:78px;background:#fff;box-shadow:inset 1px 1px 0 #808080,inset 2px 2px 0 #404040,inset -1px -1px 0 #fff,inset -2px -2px 0 #D4D0C8"></div>
<div class="a" style="left:4px;top:612px;width:793px;height:1px;background:#808080"></div>
<div class="a" style="left:4px;top:613px;width:793px;height:1px;background:#fff"></div>
<div class="t" style="left:5px;top:618px">Ready</div>
<div class="a" style="left:332px;top:616px;width:105px;height:16px;box-shadow:inset 1px 1px 0 #808080,inset -1px -1px 0 #fff"></div>
<div class="a" style="left:439px;top:616px;width:207px;height:16px;box-shadow:inset 1px 1px 0 #808080,inset -1px -1px 0 #fff"></div>
<div class="a" style="left:648px;top:616px;width:102px;height:16px;box-shadow:inset 1px 1px 0 #808080,inset -1px -1px 0 #fff"></div>
<div class="t" style="left:649px;top:618px;letter-spacing:-0.27px">Ln 83, Col 1</div>
<div class="a" style="left:752px;top:616px;width:45px;height:16px;box-shadow:inset 1px 1px 0 #808080,inset -1px -1px 0 #fff"></div>
<div class="t" style="left:753px;top:618px;letter-spacing:-0.4px">DOS</div>
<svg class="a" style="left:784px;top:619px" width="13" height="13" shape-rendering="crispEdges"><rect x="12" y="0" width="1" height="1" fill="#fff"/><rect x="11" y="1" width="1" height="1" fill="#fff"/><rect x="12" y="1" width="1" height="1" fill="#808080"/><rect x="10" y="2" width="1" height="1" fill="#fff"/><rect x="11" y="2" width="2" height="1" fill="#808080"/><rect x="9" y="3" width="1" height="1" fill="#fff"/><rect x="10" y="3" width="2" height="1" fill="#808080"/><rect x="8" y="4" width="1" height="1" fill="#fff"/><rect x="9" y="4" width="2" height="1" fill="#808080"/><rect x="12" y="4" width="1" height="1" fill="#fff"/><rect x="7" y="5" width="1" height="1" fill="#fff"/><rect x="8" y="5" width="2" height="1" fill="#808080"/><rect x="11" y="5" width="1" height="1" fill="#fff"/><rect x="12" y="5" width="1" height="1" fill="#808080"/><rect x="6" y="6" width="1" height="1" fill="#fff"/><rect x="7" y="6" width="2" height="1" fill="#808080"/><rect x="10" y="6" width="1" height="1" fill="#fff"/><rect x="11" y="6" width="2" height="1" fill="#808080"/><rect x="5" y="7" width="1" height="1" fill="#fff"/><rect x="6" y="7" width="2" height="1" fill="#808080"/><rect x="9" y="7" width="1" height="1" fill="#fff"/><rect x="10" y="7" width="2" height="1" fill="#808080"/><rect x="4" y="8" width="1" height="1" fill="#fff"/><rect x="5" y="8" width="2" height="1" fill="#808080"/><rect x="8" y="8" width="1" height="1" fill="#fff"/><rect x="9" y="8" width="2" height="1" fill="#808080"/><rect x="12" y="8" width="1" height="1" fill="#fff"/><rect x="3" y="9" width="1" height="1" fill="#fff"/><rect x="4" y="9" width="2" height="1" fill="#808080"/><rect x="7" y="9" width="1" height="1" fill="#fff"/><rect x="8" y="9" width="2" height="1" fill="#808080"/><rect x="11" y="9" width="1" height="1" fill="#fff"/><rect x="12" y="9" width="1" height="1" fill="#808080"/><rect x="2" y="10" width="1" height="1" fill="#fff"/><rect x="3" y="10" width="2" height="1" fill="#808080"/><rect x="6" y="10" width="1" height="1" fill="#fff"/><rect x="7" y="10" width="2" height="1" fill="#808080"/><rect x="10" y="10" width="1" height="1" fill="#fff"/><rect x="11" y="10" width="2" height="1" fill="#808080"/><rect x="1" y="11" width="1" height="1" fill="#fff"/><rect x="2" y="11" width="2" height="1" fill="#808080"/><rect x="5" y="11" width="1" height="1" fill="#fff"/><rect x="6" y="11" width="2" height="1" fill="#808080"/><rect x="9" y="11" width="1" height="1" fill="#fff"/><rect x="10" y="11" width="2" height="1" fill="#808080"/><rect x="0" y="12" width="1" height="1" fill="#fff"/><rect x="1" y="12" width="2" height="1" fill="#808080"/><rect x="4" y="12" width="1" height="1" fill="#fff"/><rect x="5" y="12" width="2" height="1" fill="#808080"/><rect x="8" y="12" width="1" height="1" fill="#fff"/><rect x="9" y="12" width="2" height="1" fill="#808080"/></svg>
</body></html>
